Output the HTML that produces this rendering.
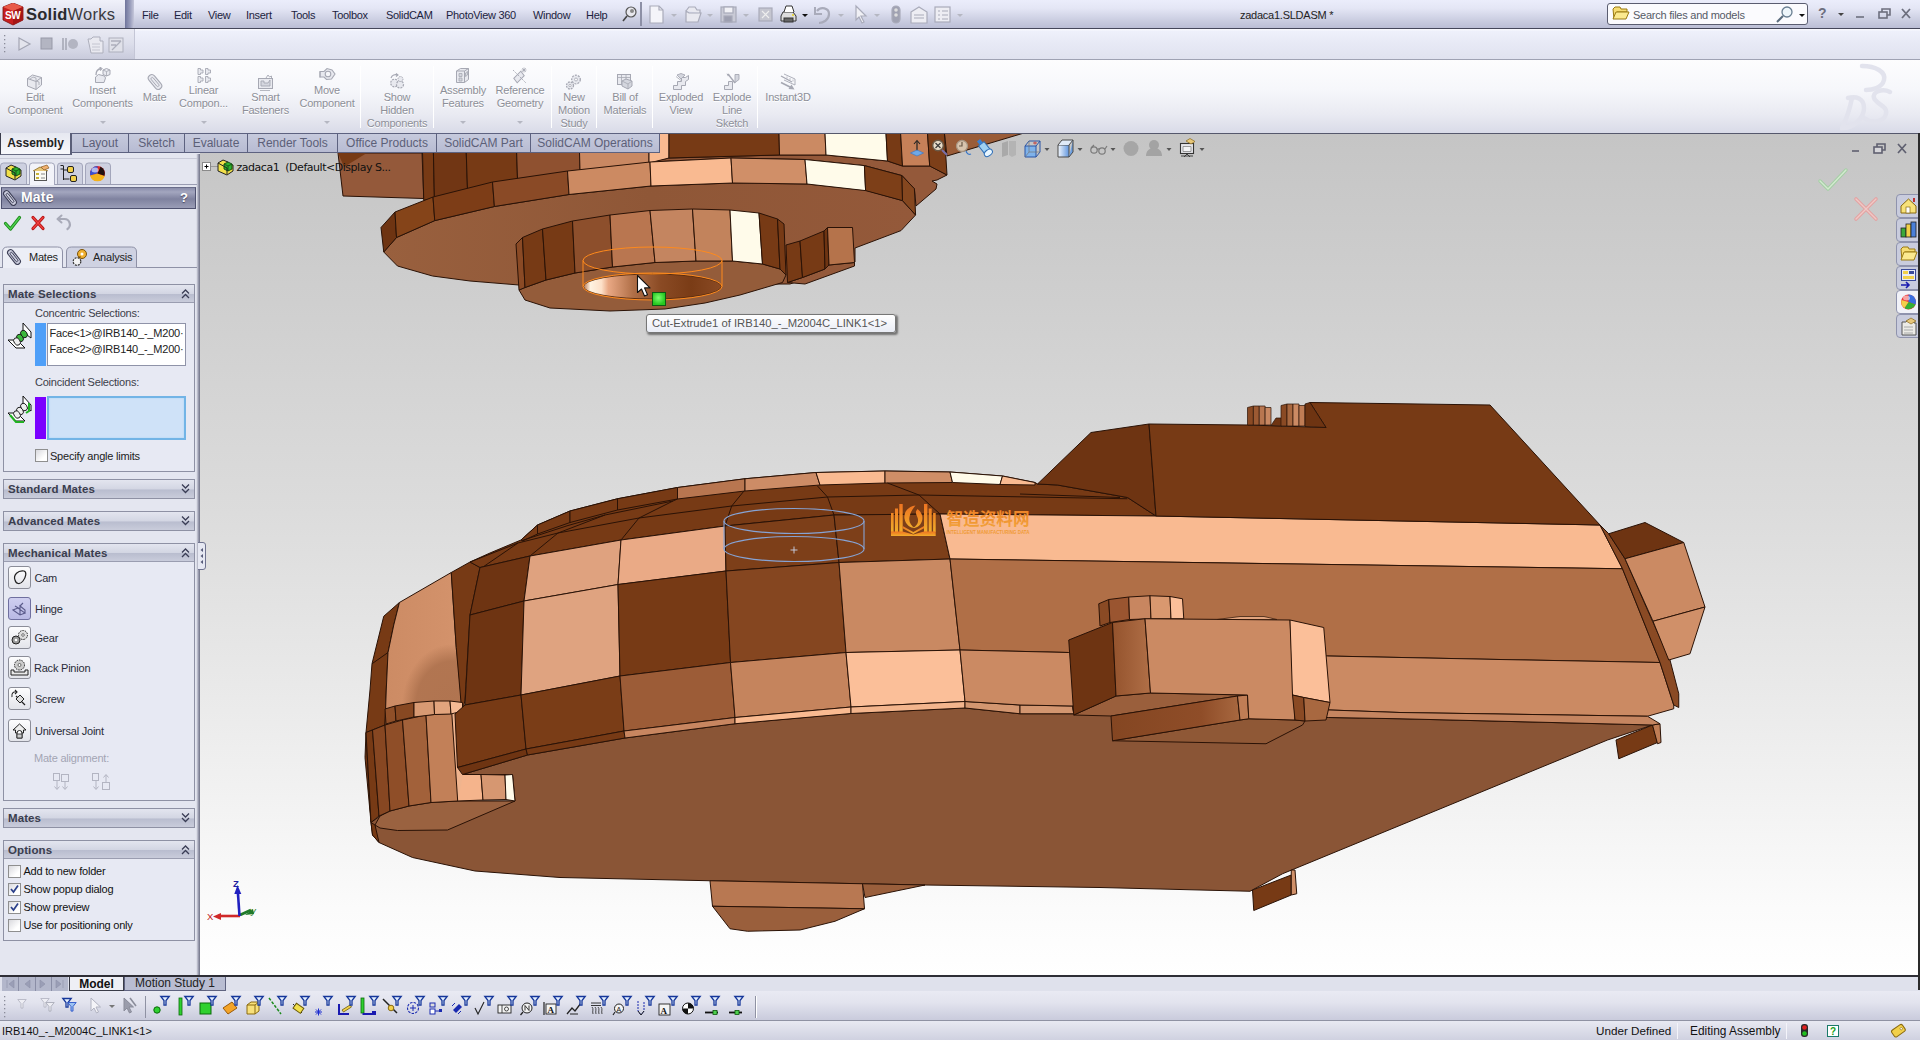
<!DOCTYPE html>
<html lang="en">
<head>
<meta charset="utf-8">
<title>zadaca1.SLDASM - SolidWorks</title>
<style>
*{box-sizing:border-box;margin:0;padding:0}
html,body{width:1920px;height:1040px;overflow:hidden;background:#e4e6f0}
body{position:relative;font-family:"Liberation Sans","DejaVu Sans",sans-serif;font-size:11px;color:#1a1a1a;-webkit-font-smoothing:antialiased}
.abs{position:absolute}
#titlebar{position:absolute;left:0;top:0;width:1920px;height:29px;background:linear-gradient(#ebedfb 0%,#e4e6f5 30%,#cdd0e3 68%,#bbbed5 100%);border-bottom:1.4px solid #45475a}
#logo{position:absolute;left:0;top:0;width:125px;height:28px;background:linear-gradient(#f0f1fa 0%,#e2e3f0 45%,#c4c6d9 100%)}
#logosep{position:absolute;left:125px;top:0;width:9px;height:28px;background:linear-gradient(90deg,#6f749b,#9b9fbd 60%,#c5c7da)}
.menu{position:absolute;top:8px;font-size:11px;letter-spacing:-0.3px;color:#1c2340;white-space:nowrap;line-height:14px}
#row2{position:absolute;left:0;top:29px;width:1920px;height:31px;background:linear-gradient(#fbfbff 0%,#eef0fb 8%,#e7e9f5 50%,#e0e2ef 100%);border-bottom:1px solid #9fa2b3}
#row2l{position:absolute;left:0;top:29px;width:135px;height:30px;background:linear-gradient(#e9eaf3 0%,#dcdeeb 50%,#c9cbdc 100%);border-right:1px solid #c4c6d6}
#cm{position:absolute;left:0;top:60px;width:1920px;height:74px;background:linear-gradient(#fdfdfe 0%,#f6f7fb 40%,#e9eaf2 75%,#d9dbe8 100%);border-bottom:1.4px solid #55586c}
.cmb{position:absolute;text-align:center;color:#8d8f98;text-shadow:0 1px 0 #fff;font-size:11px;letter-spacing:-0.2px;line-height:13px;white-space:nowrap}
.cmsep{position:absolute;top:66px;width:1px;height:62px;background:#d3d5e0;border-right:1px solid #fff}
.dd{position:absolute;width:0;height:0;border-left:3px solid transparent;border-right:3px solid transparent;border-top:3px solid #b5b7c2}
#tabs{position:absolute;left:0;top:133px;height:22px;width:660px;z-index:5}
.tab{position:absolute;top:0;height:20px;background:linear-gradient(#c6cadd,#b7bbd2);border:1.3px solid #5d6280;border-left:none;color:#5c6078;font-size:12px;line-height:18px;text-align:center;white-space:nowrap}
.tab.act{background:linear-gradient(#e6e8f1,#f8f8fb);border:none;border-left:1px solid #3a3c4c;border-right:2px solid #5a5e78;border-bottom:1.5px solid #6a6e85;color:#222;font-weight:bold;height:22px;top:0;line-height:21px}
#viewport{position:absolute;left:200px;top:134px;width:1719px;height:842px;background:linear-gradient(#c5c5c5 0%,#cfcfcf 20%,#dcdcdc 45%,#ececec 70%,#fbfbfb 92%,#ffffff 100%);overflow:hidden}
#vpr{position:absolute;left:1918px;top:133px;width:2px;height:857px;background:#2b2b2b;z-index:3}
#lp{position:absolute;left:0;top:154px;width:200px;height:822px;background:#e4e6f0}
#lpb{position:absolute;left:196px;top:154px;width:4px;height:822px;background:linear-gradient(90deg,#eceef6,#9a9caf 60%,#6f7285)}
.grp{position:absolute;left:3px;width:192px;border:1px solid #8e91a4;background:#e7e9f3}
.gh{position:absolute;left:0;top:0;width:190px;height:18px;background:linear-gradient(#e3e5ef 0%,#d3d6e3 50%,#b9bdcf 55%,#c9ccdb 100%);border-bottom:1px solid #9a9db0;font-weight:bold;font-size:11.5px;color:#3a3d4e;line-height:19px;padding-left:4px;letter-spacing:0.1px}
.gh.closed{border-bottom:none;height:18px}
.chev{position:absolute;right:4px;top:3px;width:9px;height:11px}
.lbl{position:absolute;font-size:11px;letter-spacing:-0.22px;white-space:nowrap;color:#3c3e4a;line-height:13px}
.cb{position:absolute;width:13px;height:13px;border:1px solid #8f8f8f;background:linear-gradient(135deg,#d9d9de,#fff 70%)}
.mbtn{position:absolute;left:8px;width:23px;height:23px;border:1px solid #8b8d98;border-radius:3px;background:linear-gradient(#fdfdfe,#e3e4ea)}
#botbar{position:absolute;left:0;top:974.5px;width:1920px;height:16.5px;background:#dfe1ec;border-top:2px solid #2e2e36}
#filt{position:absolute;left:0;top:991px;width:1920px;height:30px;background:linear-gradient(#e9eaf3 0%,#e2e3ee 40%,#c9cbdc 100%);border-bottom:1px solid #8f92a3}
#status{position:absolute;left:0;top:1021px;width:1920px;height:19px;background:linear-gradient(#e8e9f2,#cfd1e0);font-size:12px;color:#111}
</style>
</head>
<body>
<!-- ===== Title bar ===== -->
<div id="titlebar"></div>
<div id="logo">
<svg class="abs" style="left:2px;top:3px" width="22" height="23" viewBox="0 0 22 23">
<polygon points="1,4 11,0 21,4 21,17 11,22 1,17" fill="#c81e1e" stroke="#7a1010" stroke-width="0.8"/>
<polygon points="1,4 11,8 21,4 11,0" fill="#e85a4a"/>
<polygon points="11,8 21,4 21,17 11,22" fill="#a51515"/>
<text x="3" y="16" font-family="Liberation Sans,sans-serif" font-weight="bold" font-size="10" fill="#fff" letter-spacing="-0.5">SW</text>
</svg>
<span class="abs" style="left:26px;top:3px;font-size:16.5px;line-height:22px;color:#2a2a2e;font-weight:bold;letter-spacing:0.25px;white-space:nowrap">Solid<span style="font-weight:normal;color:#3a3a40">Works</span></span>
</div>
<div id="logosep"></div>
<span class="menu" style="left:142px">File</span>
<span class="menu" style="left:174px">Edit</span>
<span class="menu" style="left:208px">View</span>
<span class="menu" style="left:246px">Insert</span>
<span class="menu" style="left:291px">Tools</span>
<span class="menu" style="left:332px">Toolbox</span>
<span class="menu" style="left:386px">SolidCAM</span>
<span class="menu" style="left:446px">PhotoView 360</span>
<span class="menu" style="left:533px">Window</span>
<span class="menu" style="left:586px">Help</span>
<svg class="abs" style="left:622px;top:5px" width="16" height="18" viewBox="0 0 16 18"><circle cx="9" cy="7" r="5" fill="#e8e8ee" stroke="#555" stroke-width="1.2"/><path d="M5 11 L1 16" stroke="#444" stroke-width="1.6"/><circle cx="10" cy="6" r="2" fill="#888"/></svg>
<div class="abs" style="left:640px;top:2px;width:2px;height:24px;background:#8d90a6"></div>
<!-- quick access -->
<svg class="abs" style="left:645px;top:3px" width="325" height="24" viewBox="0 0 325 24" fill="none" stroke="#a9abba" stroke-width="1.2">
<path d="M5 3h9l4 4v13h-13z" fill="#f4f4f9"/><path d="M14 3v4h4"/>
<path d="M41 8l3-4h6l2 3h3v3M41 8v11h12l3-9h-12z" fill="#e9e9f0"/>
<rect x="76" y="4" width="15" height="15" fill="#c9cad6"/><rect x="79" y="4" width="9" height="6" fill="#f1f1f6"/><rect x="79" y="13" width="8" height="6" fill="#9d9fb0"/>
<rect x="114" y="5" width="13" height="13" fill="#c5c6d0"/><path d="M117 8l7 7M124 8l-7 7" stroke="#eee"/>
<g stroke="#333" stroke-width="1"><path d="M138 9h10l3 4v5h-15v-5z" fill="#ddd"/><path d="M139 9l2-6h6l2 6" fill="#fff"/><rect x="139" y="15" width="9" height="4" fill="#666"/><circle cx="148" cy="12" r="1" fill="#e7d21c" stroke="none"/></g>
<path d="M172 8c4-5 12-3 12 3s-6 9-10 9" stroke-width="2.2"/><path d="M170 4v7h7" stroke-width="2"/>
<path d="M211 3l0 14 3-3 3 6 2-1-3-6h5z" fill="#f0f0f5"/>
<rect x="247" y="3" width="8" height="17" rx="4" fill="#a0a2b2"/><circle cx="251" cy="7" r="1.8" fill="#ddd" stroke="none"/><circle cx="251" cy="12" r="1.8" fill="#ddd" stroke="none"/>
<path d="M266 9l8-5 8 5v11h-16z" fill="#ededf3"/><path d="M269 12h10M269 15h10"/>
<rect x="290" y="4" width="15" height="15" fill="#ededf3"/><path d="M293 8h2M297 8h6M293 12h2M297 12h6M293 16h2M297 16h6"/>
</svg>
<div class="dd" style="left:671px;top:14px"></div><div class="dd" style="left:707px;top:14px"></div><div class="dd" style="left:743px;top:14px"></div>
<div class="dd" style="left:802px;top:14px;border-top-color:#111"></div><div class="dd" style="left:838px;top:14px"></div><div class="dd" style="left:874px;top:14px"></div><div class="dd" style="left:957px;top:14px"></div>
<span class="abs" style="left:1240px;top:8px;font-size:11px;letter-spacing:-0.25px;line-height:14px;color:#222;white-space:nowrap" id="ttl">zadaca1.SLDASM *</span>
<!-- search -->
<div class="abs" style="left:1607px;top:3px;width:201px;height:22px;background:#fbfbfe;border:1px solid #5a5d70;border-radius:3px"></div>
<svg class="abs" style="left:1612px;top:6px" width="18" height="15" viewBox="0 0 18 15"><path d="M1 3l2-2h5l1 2h6v3h-10l-3 7z" fill="#f6dc72" stroke="#9a7a12" stroke-width="1"/><path d="M1 13l3-7h13l-3 7z" fill="#fbe98f" stroke="#9a7a12" stroke-width="1"/></svg>
<span class="abs" style="left:1633px;top:8px;font-size:11px;letter-spacing:-0.25px;line-height:14px;color:#555a66;white-space:nowrap" id="srch" >Search files and models</span>
<svg class="abs" style="left:1775px;top:5px" width="20" height="18" viewBox="0 0 20 18"><circle cx="12" cy="7" r="5" fill="#eef6fb" stroke="#6a7f92" stroke-width="1.3"/><path d="M8 11L2 17" stroke="#5a6c7d" stroke-width="2"/></svg>
<div class="dd" style="left:1799px;top:14px;border-top-color:#111"></div>
<span class="abs" style="left:1818px;top:5px;font-size:14px;font-weight:bold;color:#6d6f7e;line-height:16px">?</span>
<div class="dd" style="left:1838px;top:13px;border-top-color:#444"></div>
<svg class="abs" style="left:1852px;top:6px" width="64" height="16" viewBox="0 0 64 16" fill="none" stroke="#6d6f7e" stroke-width="1.6"><path d="M4 11h8"/><rect x="27" y="6" width="8" height="6"/><path d="M30 6v-3h8v6h-3"/><path d="M50 3l8 9M58 3l-8 9" stroke-width="1.8"/></svg>
<!-- ===== Row 2 ===== -->
<div id="row2"></div><div id="row2l"></div>
<svg class="abs" style="left:2px;top:33px" width="130" height="24" viewBox="0 0 130 24">
<g fill="#8a8c9a"><rect x="2" y="2" width="1.3" height="1.3"/><rect x="2" y="6" width="1.3" height="1.3"/><rect x="2" y="10" width="1.3" height="1.3"/><rect x="2" y="14" width="1.3" height="1.3"/><rect x="2" y="18" width="1.3" height="1.3"/></g>
<path d="M17 5v12l11-6z" fill="#e3e4ec" stroke="#a3a5b3" stroke-width="1.2"/>
<rect x="39" y="5" width="11" height="11" fill="#b3b5c2" stroke="#9799a8"/>
<path d="M61 5v12M64 5v12" stroke="#a3a5b3" stroke-width="1.5"/><circle cx="71" cy="11" r="5" fill="#b3b5c2"/>
<path d="M86 6h3l2-2h7v4h3v12h-12z" fill="#e9e9f0" stroke="#adafbc"/><path d="M90 11h8M90 14h8M90 17h8" stroke="#c4c5d0"/>
<rect x="107" y="5" width="14" height="14" fill="#e0e1e9" stroke="#adafbc"/><path d="M109 8h10M109 12h5M110 17l9-9" stroke="#adafbc" stroke-width="1.3"/>
</svg>
<!-- ===== Command manager ===== -->
<div id="cm"></div>
<svg class="abs" style="left:1840px;top:62px" width="56" height="70" viewBox="0 0 56 70" fill="none" stroke="#e2e3ed" stroke-width="4.500" stroke-linecap="round"><path d="M22 4c14 0 24 6 22 14s-12 10-18 10"/><path d="M12 36c-2 10-6 22-10 30c12 0 22-10 22-20s-8-12-16-10"/><path d="M50 30c-8-4-18 0-16 6s14 8 12 16s-14 10-22 4"/></svg>
<div class="cmb" style="left:-10.0px;top:90.95px;width:90px">Edit<br>Component</div>
<svg class="abs" style="left:26.0px;top:73.25px" width="18" height="18" viewBox="0 0 18 18"><path d="M1.500 5.500l5-3.500 9 2.500v7.500l-5.500 4.500-8.500-3.500z" fill="#e8e9ef" stroke="#a6a8b3"/><path d="M1.500 5.500l8.500 3v8M10 8.500l5.500-4" fill="none" stroke="#a6a8b3"/><path d="M4 6l3-2 3 1v3l3 1v3" fill="none" stroke="#a6a8b3" stroke-width="0.800"/></svg>
<div class="cmb" style="left:57.5px;top:84.20px;width:90px">Insert<br>Components</div>
<svg class="abs" style="left:93.5px;top:66.50px" width="18" height="18" viewBox="0 0 18 18"><path d="M2 8c0-4 2-6 5-6.500" fill="none" stroke="#a6a8b3" stroke-width="1.300"/><path d="M5.500 0l2.500 1.500-2 2" fill="none" stroke="#a6a8b3" stroke-width="1.100"/><path d="M9 3l3.500-1.500 3.500 1.500v4.500l-3.500 1.500-3.500-1.500z" fill="#e8e9ef" stroke="#a6a8b3"/><path d="M9 3l3.500 1.500 3.500-1.500M12.500 4.500v4.500" fill="none" stroke="#a6a8b3" stroke-width="0.800"/><path d="M1.500 15.500v-5.500l3-2.500 6 1.500 1 2-1.500 4.500z" fill="#e8e9ef" stroke="#a6a8b3"/></svg>
<div class="dd" style="left:99.5px;top:121px"></div>
<div class="cmb" style="left:109.5px;top:90.95px;width:90px">Mate</div>
<svg class="abs" style="left:145.5px;top:73.25px" width="18" height="18" viewBox="0 0 18 18"><g transform="rotate(-40 9 9)"><rect x="5.500" y="0.500" width="7" height="17" rx="3.500" fill="#e8e9ef" stroke="#a6a8b3" stroke-width="1.100"/><rect x="7.700" y="3.500" width="2.600" height="11" rx="1.300" fill="none" stroke="#a6a8b3" stroke-width="0.900"/></g></svg>
<div class="cmb" style="left:158.5px;top:84.20px;width:90px">Linear<br>Compon...</div>
<svg class="abs" style="left:194.5px;top:66.50px" width="18" height="18" viewBox="0 0 18 18"><path d="M3 1.5h2.500v1.500h2.500v3h-2.500v1.500h-2.500z" fill="#e8e9ef" stroke="#a6a8b3" stroke-width="0.900"/><path d="M3 9.5h2.500v1.500h2.500v3h-2.500v1.500h-2.500z" fill="#e8e9ef" stroke="#a6a8b3" stroke-width="0.900"/><path d="M10.5 1.5h2.500v1.500h2.500v3h-2.500v1.500h-2.500z" fill="#e8e9ef" stroke="#a6a8b3" stroke-width="0.900"/><path d="M10.5 9.5h2.500v1.500h2.500v3h-2.500v1.500h-2.500z" fill="#e8e9ef" stroke="#a6a8b3" stroke-width="0.900"/></svg>
<div class="dd" style="left:200.5px;top:121px"></div>
<div class="cmb" style="left:220.5px;top:90.95px;width:90px">Smart<br>Fasteners</div>
<svg class="abs" style="left:256.5px;top:73.25px" width="18" height="18" viewBox="0 0 18 18"><rect x="1.500" y="5.500" width="14" height="10" fill="#e8e9ef" stroke="#a6a8b3"/><path d="M4 13v-5h3v2h4l2-3v6z" fill="#d4d6de" stroke="#a6a8b3" stroke-width="0.900"/><path d="M9 5l2-3 1.500 2 2-1v2.500" fill="none" stroke="#a6a8b3" stroke-width="0.900"/><path d="M3 17.500h10" stroke="#a6a8b3" stroke-width="0.800"/></svg>
<div class="cmb" style="left:282.0px;top:84.20px;width:90px">Move<br>Component</div>
<svg class="abs" style="left:318.0px;top:66.50px" width="18" height="18" viewBox="0 0 18 18"><path d="M2 4.500h4l3-3 5 1.500 3 4-3.500 5-5 0.500-2.500-2.500h-4z" fill="#e8e9ef" stroke="#a6a8b3" stroke-width="1.100"/><circle cx="10" cy="7" r="2.800" fill="#f6f6f9" stroke="#a6a8b3" stroke-width="1.100"/><path d="M2 4.500v6" stroke="#a6a8b3"/></svg>
<div class="dd" style="left:324.0px;top:121px"></div>
<div class="cmb" style="left:352.0px;top:90.95px;width:90px">Show<br>Hidden<br>Components</div>
<svg class="abs" style="left:388.0px;top:73.25px" width="18" height="18" viewBox="0 0 18 18"><circle cx="6.500" cy="10" r="3.800" fill="#e8e9ef" stroke="#a6a8b3" stroke-width="1.200" stroke-dasharray="2 1"/><circle cx="12" cy="11.500" r="3.500" fill="#e8e9ef" stroke="#a6a8b3" stroke-width="1.200" stroke-dasharray="2 1"/><circle cx="12.500" cy="6" r="2.500" fill="#e8e9ef" stroke="#a6a8b3" stroke-dasharray="1.500 1"/><path d="M3 5c1-3 4-4 6.500-3M8 0.500l2 1.500-2 1.500" fill="none" stroke="#a6a8b3" stroke-width="1.100"/></svg>
<div class="cmb" style="left:418.0px;top:84.20px;width:90px">Assembly<br>Features</div>
<svg class="abs" style="left:454.0px;top:66.50px" width="18" height="18" viewBox="0 0 18 18"><path d="M2.500 4l4-2.500h8v11l-4 3h-8z" fill="#e8e9ef" stroke="#a6a8b3"/><path d="M2.500 4h8v11.500M10.500 4l4-2.500" fill="none" stroke="#a6a8b3"/><path d="M5 6.500h3v3h-3zM5 11h3v3h-3zM11.500 6l2-1.500v3.500l-2 1.500z" fill="#d4d6de" stroke="#a6a8b3" stroke-width="0.800"/></svg>
<div class="dd" style="left:460.0px;top:121px"></div>
<div class="cmb" style="left:475.0px;top:84.20px;width:90px">Reference<br>Geometry</div>
<svg class="abs" style="left:511.0px;top:66.50px" width="18" height="18" viewBox="0 0 18 18"><path d="M3 12l6-8 4 4-6 8z" fill="#e8e9ef" stroke="#a6a8b3" transform="rotate(8 8 10)"/><path d="M2 3l13 13" stroke="#a6a8b3" stroke-width="0.900" stroke-dasharray="2 1.200"/><path d="M13 0.500v5M10.500 3h5M11.200 1.200l3.600 3.600M14.800 1.200l-3.600 3.600" stroke="#a6a8b3" stroke-width="0.800"/></svg>
<div class="dd" style="left:517.0px;top:121px"></div>
<div class="cmb" style="left:529.0px;top:90.95px;width:90px">New<br>Motion<br>Study</div>
<svg class="abs" style="left:565.0px;top:73.25px" width="18" height="18" viewBox="0 0 18 18"><circle cx="11" cy="6.500" r="4.300" fill="#e8e9ef" stroke="#a6a8b3" stroke-width="1.300" stroke-dasharray="2 1.100"/><circle cx="11" cy="6.500" r="1.500" fill="#f8f8fa" stroke="#a6a8b3" stroke-width="0.800"/><circle cx="5" cy="12.500" r="3.500" fill="#e8e9ef" stroke="#a6a8b3" stroke-width="1.300" stroke-dasharray="1.800 1"/><circle cx="5" cy="12.500" r="1.200" fill="#f8f8fa" stroke="#a6a8b3" stroke-width="0.800"/></svg>
<div class="cmb" style="left:580.0px;top:90.95px;width:90px">Bill of<br>Materials</div>
<svg class="abs" style="left:616.0px;top:73.25px" width="18" height="18" viewBox="0 0 18 18"><rect x="1.500" y="1.500" width="13" height="10" fill="#e8e9ef" stroke="#a6a8b3"/><path d="M1.500 4.500h13M5.500 1.500v10M10 1.500v10" stroke="#a6a8b3" stroke-width="0.800"/><path d="M6 8l4-2 6 2v5l-4 3-6-3z" fill="#d4d6de" stroke="#a6a8b3"/><path d="M6 8l6 3 4-3M12 11v5" fill="none" stroke="#a6a8b3" stroke-width="0.800"/></svg>
<div class="cmb" style="left:636.0px;top:90.95px;width:90px">Exploded<br>View</div>
<svg class="abs" style="left:672.0px;top:73.25px" width="18" height="18" viewBox="0 0 18 18"><path d="M1.500 16.500v-4h4v-4h4v-4h4l3-2v4l-3 2v4h-4v4z" fill="#e8e9ef" stroke="#a6a8b3"/><path d="M5 2l4-1.500 4 1.500-4 4z" fill="#d4d6de" stroke="#a6a8b3" stroke-width="0.900"/><path d="M4 3.500l5 4" stroke="#a6a8b3" stroke-width="0.800"/></svg>
<div class="cmb" style="left:687.0px;top:90.95px;width:90px">Explode<br>Line<br>Sketch</div>
<svg class="abs" style="left:723.0px;top:73.25px" width="18" height="18" viewBox="0 0 18 18"><path d="M1.500 16.500v-4h4v-4h4v8z" fill="#e8e9ef" stroke="#a6a8b3"/><path d="M12 1.500h4v5l-4 3z" fill="#d4d6de" stroke="#a6a8b3" stroke-width="0.900"/><path d="M5 1l7 9" stroke="#a6a8b3" stroke-width="1.400"/><path d="M3.500 0.500l3 1-1.500 2z" fill="#a6a8b3"/></svg>
<div class="cmb" style="left:743.0px;top:90.95px;width:90px">Instant3D</div>
<svg class="abs" style="left:779.0px;top:73.25px" width="18" height="18" viewBox="0 0 18 18"><path d="M2 3l11 6" stroke="#a6a8b3" stroke-width="1.200"/><path d="M5 1l11 5v6l-11-5" fill="none" stroke="#a6a8b3" stroke-width="0.900"/><path d="M8 3.500v2M11 5v2M14 6.500v2" stroke="#a6a8b3" stroke-width="0.700"/><path d="M2 9.500l10 5" stroke="#a6a8b3" stroke-width="1.600"/><path d="M15.500 16.500l-6-0.500 3-4.500z" fill="#a6a8b3"/></svg>
<div class="cmsep" style="left:360px"></div>
<div class="cmsep" style="left:433px"></div>
<div class="cmsep" style="left:551px"></div>
<div class="cmsep" style="left:596px"></div>
<div class="cmsep" style="left:652px"></div>
<div class="cmsep" style="left:757px"></div>
<!-- ===== Viewport ===== -->
<div id="viewport">
<svg class="abs" style="left:0;top:-1px" width="1719" height="843" viewBox="200 133 1719 843" shape-rendering="geometricPrecision">
<defs>
<linearGradient id="gFl" x1="0" y1="0" x2="1" y2="0"><stop offset="0" stop-color="#99603e"/><stop offset="0.5" stop-color="#8f5737"/><stop offset="1" stop-color="#94593a"/></linearGradient>
<linearGradient id="gHole" x1="0" y1="0" x2="1" y2="0"><stop offset="0" stop-color="#b5734b"/><stop offset="0.05" stop-color="#fff3e2"/><stop offset="0.13" stop-color="#fde0c8"/><stop offset="0.18" stop-color="#e9a884"/><stop offset="0.36" stop-color="#b06f47"/><stop offset="0.56" stop-color="#8a4a24"/><stop offset="0.78" stop-color="#7a3c16"/><stop offset="1" stop-color="#8a4a24"/></linearGradient>
<linearGradient id="gPeach" x1="0" y1="0" x2="1" y2="0"><stop offset="0" stop-color="#cc8b64"/><stop offset="1" stop-color="#d4936c"/></linearGradient>
<radialGradient id="gShadow"><stop offset="0" stop-color="#b07450" stop-opacity="1"/><stop offset="0.72" stop-color="#b07450" stop-opacity="0.95"/><stop offset="1" stop-color="#b07450" stop-opacity="0"/></radialGradient>
<linearGradient id="gStep" x1="0" y1="0" x2="1" y2="0"><stop offset="0" stop-color="#844622"/><stop offset="0.7" stop-color="#8f4d28"/><stop offset="1" stop-color="#a86840"/></linearGradient>
<linearGradient id="gBlk2" x1="0" y1="0" x2="1" y2="0"><stop offset="0" stop-color="#94532d"/><stop offset="1" stop-color="#b06f47"/></linearGradient>
</defs>
<polygon points="338,153 343,196 423.75,198.5 422,153" fill="#94593a" stroke="#2a1206" stroke-width="1" stroke-linejoin="round"/>
<polygon points="338,153 366,153.5 344,167" fill="#773a15" stroke="none" stroke-width="1" stroke-linejoin="round"/>
<polygon points="396.5,237.5 434.75,220.6 494.4,206.5 569,194.5 651,186 732.5,183 807,184 865,190 902.5,200.6 915.6,215 901,230.6 855,248 855,262 790,284 519,285 470,281 432.5,276 397.5,266 383.75,252" fill="url(#gFl)" stroke="#2a1206" stroke-width="1" stroke-linejoin="round"/>
<polygon points="649,162 669,158 779,155 826,155 887.5,161 902.5,166 930,166 947,175 937,180 932,181 937,184 936,189 916,206 914.4,188.75 902,175.6 864.4,165.6 805,159.5 731,158 650,162" fill="#94593a" stroke="#2a1206" stroke-width="1" stroke-linejoin="round"/>
<polygon points="944.4,133 1024,133 947,156" fill="#9a5c38" stroke="#2a1206" stroke-width="1" stroke-linejoin="round"/>
<polygon points="422,133 433,133 434.4,198 423.75,200.5" fill="#773a15" stroke="#2a1206" stroke-width="1" stroke-linejoin="round"/>
<polygon points="433,133 465.6,133 467.5,190 434.4,198" fill="#713614" stroke="#2a1206" stroke-width="1" stroke-linejoin="round"/>
<polygon points="465.6,133 516,133 517.5,179 467.5,190" fill="#773a15" stroke="#2a1206" stroke-width="1" stroke-linejoin="round"/>
<polygon points="516,133 579,133 580,170.5 517.5,179" fill="#8f5130" stroke="#2a1206" stroke-width="1" stroke-linejoin="round"/>
<polygon points="579,133 649,133 649,163 580,170.5" fill="#c98862" stroke="#2a1206" stroke-width="1" stroke-linejoin="round"/>
<polygon points="649,133 669,133 669,158 649,163" fill="#f9ba91" stroke="#2a1206" stroke-width="1" stroke-linejoin="round"/>
<polygon points="669,133 779,133 779.5,155 669,158" fill="#773a15" stroke="#2a1206" stroke-width="1" stroke-linejoin="round"/>
<polygon points="779,133 825,133 826,155 779.5,155" fill="#cb8a63" stroke="#2a1206" stroke-width="1" stroke-linejoin="round"/>
<polygon points="825,133 886,133 887.5,161 826,155" fill="#fffbea" stroke="#2a1206" stroke-width="1" stroke-linejoin="round"/>
<polygon points="886,133 900.6,133 902.5,166 887.5,161" fill="#773a15" stroke="#2a1206" stroke-width="1" stroke-linejoin="round"/>
<polygon points="900.6,133 927.5,133 929.7,166 902.5,166" fill="#c68058" stroke="#2a1206" stroke-width="1" stroke-linejoin="round"/>
<polygon points="927.5,133 944.4,133 947,175 929.7,166" fill="#7d3f19" stroke="#2a1206" stroke-width="1" stroke-linejoin="round"/>
<polygon points="381,227.5 395,212 396.5,237.5 383.75,252" fill="#6e3412" stroke="#2a1206" stroke-width="1" stroke-linejoin="round"/>
<polygon points="395,212 433,197 434.75,220.6 396.5,237.5" fill="#854419" stroke="#2a1206" stroke-width="1" stroke-linejoin="round"/>
<polygon points="433,197 492.5,182 494.4,206.5 434.75,220.6" fill="#7d3d17" stroke="#2a1206" stroke-width="1" stroke-linejoin="round"/>
<polygon points="492.5,182 567.5,171 569,194.5 494.4,206.5" fill="#8a4a26" stroke="#2a1206" stroke-width="1" stroke-linejoin="round"/>
<polygon points="567.5,171 650,162 651,186 569,194.5" fill="#cc8a62" stroke="#2a1206" stroke-width="1" stroke-linejoin="round"/>
<polygon points="650,162 731,158 732.5,183 651,186" fill="#f9ba91" stroke="#2a1206" stroke-width="1" stroke-linejoin="round"/>
<polygon points="731,158 805,159.5 807,184 732.5,183" fill="#d08f68" stroke="#2a1206" stroke-width="1" stroke-linejoin="round"/>
<polygon points="805,159.5 864.4,165.6 865.6,190.6 807,184" fill="#fffbea" stroke="#2a1206" stroke-width="1" stroke-linejoin="round"/>
<polygon points="864.4,165.6 902,175.6 902.5,200.6 865.6,190.6" fill="#7d3f18" stroke="#2a1206" stroke-width="1" stroke-linejoin="round"/>
<polygon points="902,175.6 914.4,188.75 915.6,215 902.5,200.6" fill="#85471f" stroke="#2a1206" stroke-width="1" stroke-linejoin="round"/>
<polygon points="519,290 525,287.5 546,280 575,273 612.5,267 655,262.5 696,261 732.5,261 762.5,264 780,269 786,275 782.5,282.5 740,295 705,303 665,309 610,311 550,308 525,300" fill="#945c3a" stroke="#2a1206" stroke-width="1" stroke-linejoin="round"/>
<polygon points="516,244 522.5,237.5 525,287.5 519,290" fill="#8a4a25" stroke="#2a1206" stroke-width="1" stroke-linejoin="round"/>
<polygon points="522.5,237.5 542.5,229 546,280 525,287.5" fill="#773a15" stroke="#2a1206" stroke-width="1" stroke-linejoin="round"/>
<polygon points="542.5,229 572.5,221 575,273 546,280" fill="#773a15" stroke="#2a1206" stroke-width="1" stroke-linejoin="round"/>
<polygon points="572.5,221 610,215 612.5,267 575,273" fill="#8d4f2c" stroke="#2a1206" stroke-width="1" stroke-linejoin="round"/>
<polygon points="610,215 650,210.5 655,262.5 612.5,267" fill="#b97650" stroke="#2a1206" stroke-width="1" stroke-linejoin="round"/>
<polygon points="650,210.5 692.5,209 696,261 655,262.5" fill="#c48560" stroke="#2a1206" stroke-width="1" stroke-linejoin="round"/>
<polygon points="692.5,209 730,210 732.5,261 696,261" fill="#c2835c" stroke="#2a1206" stroke-width="1" stroke-linejoin="round"/>
<polygon points="730,210 759,213 762.5,264 732.5,261" fill="#fffbea" stroke="#2a1206" stroke-width="1" stroke-linejoin="round"/>
<polygon points="759,213 777.5,219 780,269 762.5,264" fill="#773a15" stroke="#2a1206" stroke-width="1" stroke-linejoin="round"/>
<polygon points="777.5,219 784,224 786,275 780,269" fill="#773a15" stroke="#2a1206" stroke-width="1" stroke-linejoin="round"/>
<ellipse cx="652.5" cy="286.5" rx="69" ry="12.5" fill="url(#gHole)" stroke="#4a2208" stroke-width="0.8"/>
<path d="M583.5 286.5 A69 12.5 0 0 1 721.5 286.5 A69 10 0 0 0 600 292 Z" fill="#945c3a" opacity="0"/>
<polygon points="787.5,282.5 802.5,277.5 825,269 829,265 854.5,262.5 854.5,266 805,284" fill="#94593a" stroke="#2a1206" stroke-width="1" stroke-linejoin="round"/>
<polygon points="786,245 800,241 802.5,277.5 787.5,282.5" fill="#773a15" stroke="#2a1206" stroke-width="1" stroke-linejoin="round"/>
<polygon points="800,241 824,231 825,269 802.5,277.5" fill="#773a15" stroke="#2a1206" stroke-width="1" stroke-linejoin="round"/>
<polygon points="824,231 827.5,227.5 829,265 825,269" fill="#6e3412" stroke="#2a1206" stroke-width="1" stroke-linejoin="round"/>
<polygon points="827.5,227.5 852.5,227.5 854.5,262.5 829,265" fill="#b5734b" stroke="#2a1206" stroke-width="1" stroke-linejoin="round"/>
<g fill="none" stroke="#ff8a1c" stroke-width="1"><ellipse cx="652.5" cy="260.5" rx="69.5" ry="13.5"/><ellipse cx="652.5" cy="286.5" rx="69.5" ry="13.5"/><path d="M583 260.5V286.5M722 260.5V286.5"/></g>
<polygon points="371,822.5 372.5,835 379,842.5 412.5,857.5 475,871 560,877.5 710,880.75 925,885 1100,887.5 1250,891.25 1282.5,873.75 1607.5,740 1652.5,725 1400,718.75 1328.75,717.5 1073.75,713.75 1020,713.75 965,708 851,713.5 820,716 735,723.75 625,738 527.5,755 462.5,774.5 512.5,774.5 515,801 457.5,801 409,806 380,816" fill="#8a5536" stroke="#2a1206" stroke-width="1" stroke-linejoin="round"/>
<polygon points="710,880.75 862.5,883.75 864.5,908.75 712.5,906.25" fill="#b87852" stroke="#2a1206" stroke-width="1" stroke-linejoin="round"/>
<polygon points="712.5,906.25 864.5,908.75 835,921.25 800,930 747.5,931.25 730,928.75" fill="#9a5f3c" stroke="#2a1206" stroke-width="1" stroke-linejoin="round"/>
<polygon points="862.5,883.75 925,885 865,897.5" fill="#9a5f3c" stroke="#2a1206" stroke-width="1" stroke-linejoin="round"/>
<polygon points="1616,740 1652.5,725 1657.5,742.5 1618.75,758.75" fill="#773a15" stroke="#2a1206" stroke-width="1" stroke-linejoin="round"/>
<polygon points="1652.5,725 1660,723.75 1661,742.5 1657.5,743.75" fill="#c07d55" stroke="#2a1206" stroke-width="1" stroke-linejoin="round"/>
<polygon points="1252.5,890 1291.25,875 1291.25,895 1253.75,910.5" fill="#773a15" stroke="#2a1206" stroke-width="1" stroke-linejoin="round"/>
<polygon points="1291.25,870 1295,870 1296.75,893.75 1291.25,895" fill="#d09069" stroke="#2a1206" stroke-width="1" stroke-linejoin="round"/>
<polygon points="375,825 380,816 390,811 409,806 431,802.5 457.5,801 515,801 447.5,830 397.5,830.5 380,828" fill="#9a6240" stroke="#2a1206" stroke-width="1" stroke-linejoin="round"/>
<polygon points="456,769 462.5,774.5 481,774.5 483,800 457.5,801" fill="#f5b48c" stroke="#2a1206" stroke-width="1" stroke-linejoin="round"/>
<polygon points="481,774.5 505,775 506,799.5 483,800" fill="#d69771" stroke="#2a1206" stroke-width="1" stroke-linejoin="round"/>
<polygon points="505,775 512.5,774.5 515,801 506,799.5" fill="#fffbea" stroke="#2a1206" stroke-width="1" stroke-linejoin="round"/>
<polygon points="399.4,602.5 383.75,616.25 372,663.75 370,690 366,732.5 385,725 386.25,690 388,652.5 393.75,625" fill="#773a15" stroke="#2a1206" stroke-width="1" stroke-linejoin="round"/>
<polyline points="372,663.75 388,652.5" fill="none" stroke="#2a1206" stroke-width="1" stroke-linejoin="round"/>
<polygon points="399.4,602.5 451.25,572.5 456.25,647.5 462,714 385,725 386.25,690 388,652.5 393.75,625" fill="url(#gPeach)" stroke="#2a1206" stroke-width="1" stroke-linejoin="round"/>
<clipPath id="cpPeach"><polygon points="399.4,602.5 451.25,572.5 456.25,647.5 462,714 385,725 386.25,690 388,652.5 393.75,625"/></clipPath><ellipse cx="452" cy="706" rx="50" ry="62" fill="url(#gShadow)" clip-path="url(#cpPeach)"/>
<polygon points="451.25,572.5 470,562 480,567.5 470,615 465,700 462,714 456.25,647.5" fill="#773a15" stroke="#2a1206" stroke-width="1" stroke-linejoin="round"/>
<polygon points="371,822.5 372.5,835 379,842.5 375,825" fill="#773a15" stroke="#2a1206" stroke-width="1" stroke-linejoin="round"/>
<polygon points="451,713 456,713 458,768 463,775 458,801 452,790" fill="#f0b48e" stroke="none" stroke-width="1" stroke-linejoin="round"/>
<polygon points="366,732.5 365,757.5 371,822.5" fill="#6e3412" stroke="#2a1206" stroke-width="1" stroke-linejoin="round"/>
<polygon points="366,732.5 372.5,730 379,816 371,822.5" fill="#773a15" stroke="#2a1206" stroke-width="1" stroke-linejoin="round"/>
<polygon points="372.5,730 385,725 390,811 379,816" fill="#874722" stroke="#2a1206" stroke-width="1" stroke-linejoin="round"/>
<polygon points="385,725 402.5,720 409,806 390,811" fill="#8f4e28" stroke="#2a1206" stroke-width="1" stroke-linejoin="round"/>
<polygon points="402.5,720 426,715 431,802.5 409,806" fill="#a2613a" stroke="#2a1206" stroke-width="1" stroke-linejoin="round"/>
<polygon points="426,715 451.8,713.5 457.7,801 431,802.5" fill="#c28058" stroke="#2a1206" stroke-width="1" stroke-linejoin="round"/>
<polygon points="385,709 395,706 396,721 386,724" fill="#8f4f28" stroke="#2a1206" stroke-width="1" stroke-linejoin="round"/>
<polygon points="395,706 414,702.5 414,717 396,721" fill="#874822" stroke="#2a1206" stroke-width="1" stroke-linejoin="round"/>
<polygon points="414,702.5 434,701 434.5,714.5 414,717" fill="#d89a73" stroke="#2a1206" stroke-width="1" stroke-linejoin="round"/>
<polygon points="434,701 450,701 451,714 434.5,714.5" fill="#e2a47d" stroke="#2a1206" stroke-width="1" stroke-linejoin="round"/>
<polygon points="450,701 462.5,702.5 462.5,711 451,714" fill="#f6bb95" stroke="#2a1206" stroke-width="1" stroke-linejoin="round"/>
<polygon points="480,567.5 470,562 490,553 521,540 537.5,525 570,511 617.5,498.75 677.5,487.5 745,478.75 816,472.5 885,471 950,472 1002.5,476 1035,482.5 1037.5,484 1057.5,485 1127.5,497.5 1156,516 940,514 834,515 725,526 621,540 530,556" fill="#773a15" stroke="#2a1206" stroke-width="1" stroke-linejoin="round"/>
<polygon points="521,540 537.5,525 537.5,534 522.5,541" fill="#773a15" stroke="#2a1206" stroke-width="1" stroke-linejoin="round"/>
<polygon points="537.5,525 570,511 570,522.5 537.5,534" fill="#773a15" stroke="#2a1206" stroke-width="1" stroke-linejoin="round"/>
<polygon points="570,511 617.5,498.75 617.5,510 570,522.5" fill="#773a15" stroke="#2a1206" stroke-width="1" stroke-linejoin="round"/>
<polygon points="617.5,498.75 677.5,487.5 677.5,499 617.5,510" fill="#773a15" stroke="#2a1206" stroke-width="1" stroke-linejoin="round"/>
<polygon points="677.5,487.5 745,478.75 745,491 677.5,499" fill="#b87650" stroke="#2a1206" stroke-width="1" stroke-linejoin="round"/>
<polygon points="745,478.75 816,472.5 820,485 745,491" fill="#cd8c66" stroke="#2a1206" stroke-width="1" stroke-linejoin="round"/>
<polygon points="816,472.5 885,471 885,483 820,485" fill="#f9ba91" stroke="#2a1206" stroke-width="1" stroke-linejoin="round"/>
<polygon points="885,471 950,472 952.5,482.5 885,483" fill="#cf8e67" stroke="#2a1206" stroke-width="1" stroke-linejoin="round"/>
<polygon points="950,472 1002.5,476 1000,484.5 952.5,482.5" fill="#fffbea" stroke="#2a1206" stroke-width="1" stroke-linejoin="round"/>
<polygon points="1002.5,476 1035,482.5 1035,485 1000,484.5" fill="#f9ba91" stroke="#2a1206" stroke-width="1" stroke-linejoin="round"/>
<polyline points="470,562 518,543 558,533 639,518 731.7,506 827.5,497 919,495 1127.5,498.75" fill="none" stroke="#2a1206" stroke-width="1" stroke-linejoin="round"/>
<polyline points="522,540.5 568,525.5 605,515 673,501 677.5,499" fill="none" stroke="#2a1206" stroke-width="1" stroke-linejoin="round"/>
<polyline points="530,556 558,533 605,515" fill="none" stroke="#2a1206" stroke-width="1" stroke-linejoin="round"/>
<polyline points="480.8,568.5 518,543" fill="none" stroke="#2a1206" stroke-width="1" stroke-linejoin="round"/>
<polyline points="621,540 639,518 673,501" fill="none" stroke="#2a1206" stroke-width="1" stroke-linejoin="round"/>
<polyline points="725,526 731.7,506 744,491" fill="none" stroke="#2a1206" stroke-width="1" stroke-linejoin="round"/>
<polyline points="834,515 827.5,497 817.5,486" fill="none" stroke="#2a1206" stroke-width="1" stroke-linejoin="round"/>
<polyline points="940,514 919,495 887.5,483" fill="none" stroke="#2a1206" stroke-width="1" stroke-linejoin="round"/>
<polyline points="1020,494 1120,497.5" fill="none" stroke="#2a1206" stroke-width="1" stroke-linejoin="round"/>
<polygon points="480,567.5 530,556 524,601 470,615" fill="#6e3412" stroke="#2a1206" stroke-width="1" stroke-linejoin="round"/>
<polygon points="530,556 621,540 618,584.5 524,601" fill="#dfa27f" stroke="#2a1206" stroke-width="1" stroke-linejoin="round"/>
<polygon points="621,540 725,526 726,571 618,584.5" fill="#eaaa86" stroke="#2a1206" stroke-width="1" stroke-linejoin="round"/>
<polygon points="725,526 834,515 839,562.5 726,571" fill="#7d3f19" stroke="#2a1206" stroke-width="1" stroke-linejoin="round"/>
<polygon points="834,515 940,514 950,559 839,562.5" fill="#7d3f19" stroke="#2a1206" stroke-width="1" stroke-linejoin="round"/>
<polygon points="470,615 524,601 521,695 465,705" fill="#6e3412" stroke="#2a1206" stroke-width="1" stroke-linejoin="round"/>
<polygon points="524,601 618,584.5 620,676 521,695" fill="#dfa380" stroke="#2a1206" stroke-width="1" stroke-linejoin="round"/>
<polygon points="618,584.5 726,571 730.5,662.5 620,676" fill="#773a15" stroke="#2a1206" stroke-width="1" stroke-linejoin="round"/>
<polygon points="726,571 839,562.5 846,652.5 730.5,662.5" fill="#854620" stroke="#2a1206" stroke-width="1" stroke-linejoin="round"/>
<polygon points="839,562.5 950,559 960,650 846,652.5" fill="#c98962" stroke="#2a1206" stroke-width="1" stroke-linejoin="round"/>
<polygon points="465,705 521,695 526,749 457.5,767.5 455,714" fill="#773a15" stroke="#2a1206" stroke-width="1" stroke-linejoin="round"/>
<polygon points="521,695 620,676 624,731 526,749" fill="#7a3d17" stroke="#2a1206" stroke-width="1" stroke-linejoin="round"/>
<polygon points="620,676 730.5,662.5 735,717.5 624,731" fill="#9c5c37" stroke="#2a1206" stroke-width="1" stroke-linejoin="round"/>
<polygon points="730.5,662.5 846,652.5 851,707 735,717.5" fill="#c5845d" stroke="#2a1206" stroke-width="1" stroke-linejoin="round"/>
<polygon points="846,652.5 960,650 965,701.5 851,707" fill="#fbbf99" stroke="#2a1206" stroke-width="1" stroke-linejoin="round"/>
<polygon points="457.5,767.5 526,749 527.5,755 462.5,774.5" fill="#6e3412" stroke="#2a1206" stroke-width="1" stroke-linejoin="round"/>
<polygon points="526,749 624,731 625,738 527.5,755" fill="#773a15" stroke="#2a1206" stroke-width="1" stroke-linejoin="round"/>
<polygon points="624,731 735,717.5 735,723.75 625,738" fill="#c88660" stroke="#2a1206" stroke-width="1" stroke-linejoin="round"/>
<polygon points="735,717.5 851,707 851,713.5 735,723.75" fill="#f9ba91" stroke="#2a1206" stroke-width="1" stroke-linejoin="round"/>
<polygon points="851,707 965,701.5 965,708 851,713.5" fill="#f3b58d" stroke="#2a1206" stroke-width="1" stroke-linejoin="round"/>
<polygon points="965,701.5 1020,705 1020,713.75 965,708" fill="#d39670" stroke="#2a1206" stroke-width="1" stroke-linejoin="round"/>
<polygon points="1020,705 1072.5,706 1073.75,713.75 1020,713.75" fill="#d39670" stroke="#2a1206" stroke-width="1" stroke-linejoin="round"/>
<polygon points="940,514 1156,516 1600,525 1622.5,568.75 1400,565.5 950,559" fill="#f9ba91" stroke="#2a1206" stroke-width="1" stroke-linejoin="round"/>
<polygon points="950,559 1400,565.5 1622.5,568.75 1660,662.5 1500,659.5 1327.5,656 1068.75,652.5 960,650" fill="#b06f47" stroke="#2a1206" stroke-width="1" stroke-linejoin="round"/>
<polygon points="960,650 1068.75,652.5 1327.5,656 1500,659.5 1660,662.5 1673.75,705 1673.75,708.75 1647.5,716.25 1400,712.5 1330,710 1072.5,706 1020,705 965,701.5" fill="#cb8a63" stroke="#2a1206" stroke-width="1" stroke-linejoin="round"/>
<polygon points="1072.5,706 1330,710 1400,712.5 1647.5,716.25 1660,723.75 1652.5,725 1400,718.75 1328.75,717.5 1073.75,713.75" fill="#c58560" stroke="#2a1206" stroke-width="1" stroke-linejoin="round"/>
<polygon points="1600,525 1608.75,533.75 1625,558.75 1652.5,621.25 1670,660 1678.75,693.75 1678.75,707.5 1673.75,705 1660,662.5 1622.5,568.75" fill="#8a4a24" stroke="#2a1206" stroke-width="1" stroke-linejoin="round"/>
<polygon points="1608.75,533.75 1645,522.5 1683.75,542.5 1625,558.75" fill="#6e3412" stroke="#2a1206" stroke-width="1" stroke-linejoin="round"/>
<polygon points="1625,558.75 1683.75,542.5 1705,607 1653,621.25" fill="#cb8a63" stroke="#2a1206" stroke-width="1" stroke-linejoin="round"/>
<polygon points="1653,621.25 1705,607 1690,653.75 1668.75,660" fill="#d09069" stroke="#2a1206" stroke-width="1" stroke-linejoin="round"/>
<polygon points="1037.5,484 1091,432.5 1149,424 1156,516 1127.5,497.5 1057.5,485" fill="#6e3412" stroke="#2a1206" stroke-width="1" stroke-linejoin="round"/>
<polygon points="1149,424 1247.5,425 1326,427.5 1310,402.5 1490,405 1600,525 1156,516" fill="#773a15" stroke="#2a1206" stroke-width="1" stroke-linejoin="round"/>
<polygon points="1247.5,407.5 1253.38,406 1253.38,425 1247.5,425" fill="#8a4a24" stroke="#2a1206" stroke-width="0.7" stroke-linejoin="round"/>
<polygon points="1253.38,406 1259.25,406 1259.25,425 1253.38,425" fill="#9c5a33" stroke="#2a1206" stroke-width="0.7" stroke-linejoin="round"/>
<polygon points="1259.25,406 1265.12,406 1265.12,425 1259.25,425" fill="#b87650" stroke="#2a1206" stroke-width="0.7" stroke-linejoin="round"/>
<polygon points="1265.12,407.5 1271,407.5 1271,425 1265.12,425" fill="#c98862" stroke="#2a1206" stroke-width="0.7" stroke-linejoin="round"/>
<polygon points="1271,425.5 1276,418 1282,418 1282,426" fill="#6e3412" stroke="#2a1206" stroke-width="0.7" stroke-linejoin="round"/>
<polygon points="1281,405.5 1287,404 1287,426 1281,426" fill="#8a4a24" stroke="#2a1206" stroke-width="0.7" stroke-linejoin="round"/>
<polygon points="1287,404 1293,404 1293,426 1287,426" fill="#a86840" stroke="#2a1206" stroke-width="0.7" stroke-linejoin="round"/>
<polygon points="1293,404 1299,404 1299,426 1293,426" fill="#cb8a63" stroke="#2a1206" stroke-width="0.7" stroke-linejoin="round"/>
<polygon points="1299,405.5 1305,405.5 1305,426 1299,426" fill="#c07d55" stroke="#2a1206" stroke-width="0.7" stroke-linejoin="round"/>
<polygon points="1305,404 1310,402.5 1326,427.5 1305,426.5" fill="#6e3412" stroke="#2a1206" stroke-width="0.8" stroke-linejoin="round"/>
<polygon points="1073.75,715 1116,696 1150.5,693 1247.5,695 1237.5,696 1111,716" fill="#9a5f3c" stroke="#2a1206" stroke-width="1" stroke-linejoin="round"/>
<polygon points="1112.5,740.75 1240,720 1248.75,718.75 1295,720 1305,721 1302.5,725 1266,743.75" fill="#8f5836" stroke="#2a1206" stroke-width="1" stroke-linejoin="round"/>
<polygon points="1111,716 1237.5,696 1240,720 1112.5,740.75" fill="url(#gStep)" stroke="#2a1206" stroke-width="1" stroke-linejoin="round"/>
<polygon points="1237.5,696 1247.5,695 1248.75,718.75 1240,720" fill="#c07d55" stroke="#2a1206" stroke-width="1" stroke-linejoin="round"/>
<polygon points="1098.75,603.75 1108.75,599.5 1110,622.5 1100,626" fill="#8a4a24" stroke="#2a1206" stroke-width="1" stroke-linejoin="round"/>
<polygon points="1108.75,599.5 1128.75,597 1129.5,619.5 1110,622.5" fill="#9a5530" stroke="#2a1206" stroke-width="1" stroke-linejoin="round"/>
<polygon points="1128.75,597 1150,595.75 1151,618.75 1129.5,619.5" fill="#c88660" stroke="#2a1206" stroke-width="1" stroke-linejoin="round"/>
<polygon points="1150,595.75 1170,596.5 1171,618.75 1151,618.75" fill="#d9986f" stroke="#2a1206" stroke-width="1" stroke-linejoin="round"/>
<polygon points="1170,596.5 1182.5,598.75 1183.75,618.75 1171,618.75" fill="#fbbf99" stroke="#2a1206" stroke-width="1" stroke-linejoin="round"/>
<polygon points="1217,619.5 1240,616.5 1264,616.5 1277,619.5" fill="#e3a57f" stroke="#2a1206" stroke-width="0.7" stroke-linejoin="round"/>
<polygon points="1068.75,640 1112.5,622.5 1116,696 1073.75,715" fill="#6e3412" stroke="#2a1206" stroke-width="1" stroke-linejoin="round"/>
<polygon points="1112.5,622.5 1145,618.75 1150.5,693 1116,696" fill="url(#gBlk2)" stroke="#2a1206" stroke-width="1" stroke-linejoin="round"/>
<polygon points="1145,618.75 1290,620 1295,720 1248.75,718.75 1247.5,695 1150.5,693" fill="#cb8a63" stroke="#2a1206" stroke-width="1" stroke-linejoin="round"/>
<polygon points="1290,620 1323.75,627.5 1330,702.5 1303.75,697.5 1292.5,695" fill="#fbbf99" stroke="#2a1206" stroke-width="1" stroke-linejoin="round"/>
<polygon points="1292.5,695 1303.75,697.5 1305,721 1295,720" fill="#8a4a24" stroke="#2a1206" stroke-width="1" stroke-linejoin="round"/>
<polygon points="1303.75,697.5 1330,702.5 1326,720 1305,721" fill="#a86840" stroke="#2a1206" stroke-width="1" stroke-linejoin="round"/>
<g fill="none" stroke="#86a3d4" stroke-width="1.1"><ellipse cx="794" cy="521" rx="70" ry="12.5"/><ellipse cx="794" cy="549" rx="70" ry="12.5"/><path d="M724 521V549M864 521V549"/><path d="M790.5 550h7M794 546.5v7" stroke="#c9d4ea" stroke-width="0.9"/></g>
</svg>
<!--VPEXTRA-->
</div>
<div id="vpr"></div>
<!-- viewport overlays (page coordinates) -->
<!-- feature tree root -->
<svg class="abs" style="left:200.5px;top:157.5px" width="34" height="20" viewBox="0 0 34 20">
<path d="M10 8.5h7" stroke="#9a9a9a" stroke-width="1"/>
<rect x="1.5" y="4.5" width="8" height="8" fill="#fff" stroke="#8a8a8a"/><path d="M3.5 8.5h4M5.5 6.5v4" stroke="#000" stroke-width="1"/>
<path d="M17 5l5-3 5 2v2l5 1v6l-6 4-9-4z" fill="#f2e04a" stroke="#222" stroke-width="1"/>
<path d="M23 6l4-2 4 2v5l-4 2-4-2z" fill="#2fb02f" stroke="#0d4a0d" stroke-width="0.9"/><path d="M23 6l4 2 4-2M27 8v5" stroke="#0d4a0d" stroke-width="0.8" fill="none"/>
<path d="M17 5l9 5v6" stroke="#222" fill="none"/>
</svg>
<span class="abs" style="left:236.5px;top:161px;font-size:11px;line-height:13px;color:#111;white-space:nowrap;font-family:'DejaVu Sans','Liberation Sans',sans-serif;letter-spacing:-0.47px" id="treetxt">zadaca1&nbsp; (Default&lt;Display S...</span>
<!-- heads-up toolbar -->
<svg class="abs" style="left:905px;top:137px" width="310" height="24" viewBox="905 137 310 24">
<g><path d="M917 141v12" stroke="#222" stroke-width="1.2"/><path d="M914 144l3-3.5 3 3.5" fill="none" stroke="#222" stroke-width="1.1"/><path d="M910.5 153l6.5-3 6.5 3-6.5 3z" fill="#6fa8e6" stroke="#3f78c0" stroke-width="0.7"/></g>
<g><circle cx="938" cy="145.5" r="5.3" fill="#e9dcc9" stroke="#6b5a48" stroke-width="1.4"/><path d="M935.5 143l5 5M940.5 143l-5 5" stroke="#3a3a3a" stroke-width="1.2"/><path d="M942 150l5 5" stroke="#7a6fa8" stroke-width="2"/></g>
<g><circle cx="962" cy="146" r="5.5" fill="#d8c4ae" stroke="#a89684" stroke-width="1.3"/><path d="M962 142v4h-3" stroke="#6a5a4a" fill="none" stroke-width="1.2"/><path d="M966 151c1 3 3 4 5 3" stroke="#3a78c8" stroke-width="1.3" fill="none"/></g>
<g transform="rotate(-38 986 149)"><rect x="982" y="142" width="7" height="10" fill="#9fd0f2" stroke="#2f6fb8" stroke-width="1"/><ellipse cx="985.5" cy="153.5" rx="4.5" ry="3" fill="#e8f6ff" stroke="#2f6fb8" stroke-width="1"/><rect x="983.5" y="137.5" width="4" height="4.5" fill="#3b7fd0"/></g>
<g fill="#a9a9a9"><path d="M1002 143l6-2v14l-6 2z"/><path d="M1009 141h7v14l-4 2-3-2z" fill="#b4b4b4"/></g>
<g stroke="#2a55a5" stroke-width="1" fill="none"><path d="M1025 146h11v11h-11z" fill="#7fb2ea"/><path d="M1025 146l4-5h11l-4 5M1036 157l4-5v-11" /><path d="M1029 141v11h11M1029 152l-4 5" stroke="#777" stroke-width="0.7"/><path d="M1033 143h4M1035 141.5v3" stroke="#c03030" stroke-width="0.8"/></g>
<path d="M1044.5 148h5l-2.5 3z" fill="#555"/>
<g stroke="#4a4a4a" stroke-width="1" fill="none"><path d="M1058 145h11v12h-11z" fill="url(#cubeg)"/><path d="M1058 145l4-5h11l-4 5" fill="#dfeaf8"/><path d="M1069 157l4-5v-12" fill="#6d9fe0"/></g>
<path d="M1077.500 148h5l-2.5 3z" fill="#555"/>
<g stroke="#7a7a7a" stroke-width="1.2" fill="none"><circle cx="1094" cy="150" r="3.2"/><circle cx="1102" cy="151" r="3.2"/><path d="M1097 149.500c1-1 2-1 2.300 0M1091 148l3-3M1105 149l2-3"/></g>
<path d="M1110.500 148h5l-2.500 3z" fill="#555"/>
<circle cx="1131" cy="148.500" r="7.500" fill="#a6a6a6"/>
<g fill="#a3a3a3"><circle cx="1154" cy="145" r="5"/><path d="M1146 156c0-5 3-8 8-8s8 3 8 8z"/></g>
<path d="M1166.500 148h5l-2.500 3z" fill="#555"/>
<g><rect x="1180.500" y="143.500" width="13" height="10" fill="#e6e6ea" stroke="#333" stroke-width="1.1"/><path d="M1183 146.500h8v5h-8z" fill="#f4f4f6" stroke="#777" stroke-width="0.7"/><path d="M1184 157l3-3 3 3M1181 156h12" stroke="#333" stroke-width="0.9" fill="none"/><path d="M1186 141l4-2.500 5 3-4 2.500z" fill="#e7c77a" stroke="#8a6a20" stroke-width="0.7"/></g>
<path d="M1199.500 148h5l-2.500 3z" fill="#555"/>
<defs><linearGradient id="cubeg" x1="0" y1="0" x2="1" y2="0"><stop offset="0" stop-color="#f4f8fd"/><stop offset="1" stop-color="#5f95de"/></linearGradient></defs>
</svg>
<!-- child window buttons -->
<svg class="abs" style="left:1846px;top:140px" width="66" height="18" viewBox="0 0 66 18" fill="none" stroke="#5f6070" stroke-width="1.6"><path d="M6 11h7"/><rect x="28" y="7" width="8" height="6" fill="#d6d6da"/><path d="M31 7v-3h8v6h-3"/><path d="M52 4l8 9M60 4l-8 9" stroke-width="1.7"/></svg>
<!-- confirmation corner -->
<svg class="abs" style="left:1816px;top:166px" width="66" height="58" viewBox="0 0 66 58" fill="none" stroke-linecap="round" stroke-linejoin="round">
<path d="M4 15l8 8 18-19" stroke="#a5cfa5" stroke-width="3.4"/><path d="M4 15l8 8 18-19" stroke="#d3ead0" stroke-width="1.4"/>
<path d="M40 33l20 20M60 33l-20 20" stroke="#e3a3a3" stroke-width="3.6"/><path d="M40 33l20 20M60 33l-20 20" stroke="#f0c9c6" stroke-width="1.4"/>
</svg>
<!-- green square handle, cursor -->
<div class="abs" style="left:652px;top:292px;width:14px;height:14px;background:radial-gradient(circle at 45% 40%,#7dff6e,#25c820 70%);border:1.500px solid #0c5a12"></div>
<svg class="abs" style="left:636px;top:274px" width="16" height="24" viewBox="0 0 16 24"><path d="M1.500 1.500v17l4-3.500 3 7 3-1.300-3-6.800h5.500z" fill="#fff" stroke="#111" stroke-width="1.100" stroke-linejoin="round"/></svg>
<!-- tooltip -->
<div class="abs" style="left:646px;top:314px;width:250px;height:19px;border:1px solid #767676;border-radius:3px;background:linear-gradient(#ffffff,#e9ecf5);box-shadow:1.500px 1.500px 2px rgba(0,0,0,0.45)"></div>
<span class="abs" style="left:652px;top:317px;font-size:11.250px;line-height:13px;color:#555;white-space:nowrap" id="tip">Cut-Extrude1 of IRB140_-_M2004C_LINK1&lt;1&gt;</span>
<!-- watermark -->
<svg class="abs" style="left:888px;top:501px" width="146" height="38" viewBox="888 501 146 38">
<defs><linearGradient id="gW" x1="0" y1="0" x2="0" y2="1"><stop offset="0" stop-color="#ee7422"/><stop offset="0.55" stop-color="#f09226"/><stop offset="1" stop-color="#f2ae2c"/></linearGradient>
<linearGradient id="gWt" x1="0" y1="0" x2="0" y2="1"><stop offset="0" stop-color="#ee8226"/><stop offset="1" stop-color="#f2a43c"/></linearGradient></defs>
<g fill="url(#gW)">
<path d="M891 513h2.600v19h-2.600zM895 508.500h3v23.500h-3zM899.300 504h3.400v28h-3.400zM924 504h3.400v28h-3.400zM928.700 508.500h3v23.500h-3zM933.100 513h2.600v19h-2.600z"/>
<path d="M891 531.500h11.700l10.600 3 10.700-3h11.700v4.500h-44.700z"/>
<path d="M902.700 526l10.600 6 10.700-6v2.200l-10.700 5.800-10.600-5.800z"/>
<path d="M915.500 505.500c-7.500 1-12 6.500-11 13s6 9.500 10.500 9.500c-4-2.500-6.500-6-5.500-11s3-8 6-11.500z"/>
<path d="M917.500 509c4 3 6 7.500 4.500 12s-5 7-9 7c3.500-2 5.500-5 5-8.500s-2.500-5-2-8c0.300-1 0.800-1.800 1.500-2.500z"/>
</g>
<text x="946.500" y="525" font-family="'Liberation Sans','Noto Sans CJK SC',sans-serif" font-size="17.500" font-weight="bold" fill="url(#gWt)" textLength="83" lengthAdjust="spacingAndGlyphs">智造资料网</text>
<text x="946.500" y="534.300" font-family="'Liberation Sans',sans-serif" font-size="4.600" font-weight="bold" fill="#f09a36" textLength="83" lengthAdjust="spacingAndGlyphs">INTELLIGENT MANUFACTURING DATA</text>
</svg>
<!-- triad -->
<svg class="abs" style="left:204px;top:874px" width="58" height="52" viewBox="204 874 58 52">
<path d="M240 915l11-5" stroke="#1f7a2a" stroke-width="3"/><path d="M245 915l8-6 1 5z" fill="#1f7a2a"/>
<path d="M240 916h-22" stroke="#d02828" stroke-width="2.600"/><path d="M213 916.500l8-3.500v7z" fill="#d02828"/>
<path d="M239.500 916l-1.500-22" stroke="#2020c0" stroke-width="2.600"/><path d="M237.500 885l3.800 9h-7z" fill="#2020c0"/>
<text x="233" y="887" font-family="'Liberation Sans',sans-serif" font-size="9.500" fill="#2020a0" font-weight="bold">Z</text>
<text x="207" y="920" font-family="'Liberation Sans',sans-serif" font-size="9.500" fill="#c02020">X</text>
<text x="251" y="914" font-family="'Liberation Sans',sans-serif" font-size="9.500" fill="#1f7a2a" font-style="italic">y</text>
</svg>
<!-- task pane tabs -->
<svg class="abs" style="left:1894px;top:192px" width="25" height="150" viewBox="1894 192 25 150">
<g stroke="#8f93ad" stroke-width="1">
<path d="M1919 194.500h-19q-3.500 0-3.500 3.500v16q0 3.500 3.500 3.500h19z" fill="#c9ccdd"/>
<path d="M1919 218.500h-19q-3.500 0-3.500 3.500v16q0 3.500 3.500 3.500h19z" fill="#c9ccdd"/>
<path d="M1919 242.500h-19q-3.500 0-3.500 3.500v16q0 3.500 3.500 3.500h19z" fill="#c9ccdd"/>
<path d="M1919 266.500h-19q-3.500 0-3.500 3.500v16q0 3.500 3.500 3.500h19z" fill="#c9ccdd"/>
<path d="M1919 290.500h-19q-3.500 0-3.500 3.500v16q0 3.500 3.500 3.500h19z" fill="#f1f2f8"/>
<path d="M1919 314.500h-19q-3.500 0-3.500 3.500v16q0 3.500 3.500 3.500h19z" fill="#c9ccdd"/>
</g>
<path d="M1901 206l7.500-7 7.500 7v7h-15z" fill="#f8e27a" stroke="#8a6a10" stroke-width="1"/><rect x="1906" y="207" width="4" height="6" fill="#fff" stroke="#8a6a10" stroke-width="0.700"/><rect x="1913" y="198" width="2" height="4" fill="#c03030"/>
<g stroke="#222" stroke-width="0.800"><rect x="1901" y="228" width="5" height="9" fill="#3aa83a"/><rect x="1906" y="224" width="5" height="13" fill="#f2d04a"/><rect x="1911" y="222" width="5" height="15" fill="#4a7fd8"/></g>
<path d="M1901 249l2-2h5l1 2h6v3h-10l-3 8z" fill="#f6dc72" stroke="#9a7a12"/><path d="M1901 260l3-8h13l-3 8z" fill="#fbe98f" stroke="#9a7a12"/>
<g><rect x="1901.500" y="269.500" width="14" height="11" fill="#e8ebf8" stroke="#3a4a9a"/><rect x="1903" y="271" width="5" height="3" fill="#f2d04a"/><rect x="1909" y="271" width="5" height="3" fill="#3a4a9a"/><rect x="1903" y="276" width="11" height="3" fill="#f2d04a"/><path d="M1901 285h8M1906 282l3 3-3 3" stroke="#1a1ab0" stroke-width="1.600" fill="none"/></g>
<circle cx="1908.500" cy="302" r="7.500" fill="#e33"/><path d="M1908.500 302v-7.500a7.500 7.500 0 0 1 7 10z" fill="#3a6fe0"/><path d="M1908.500 302l7 2.500a7.500 7.500 0 0 1 -11 3.500z" fill="#34b034"/><path d="M1908.500 302l-4 6a7.500 7.500 0 0 1 -3-8z" fill="#f2d04a"/><ellipse cx="1906.500" cy="298" rx="3.500" ry="2.500" fill="#fff" opacity="0.550"/>
<path d="M1902 322h4l2-2h6v3h2v12h-14z" fill="#ecebe6" stroke="#555"/><path d="M1904 327h9M1904 330h9M1904 333h9" stroke="#999" stroke-width="0.800"/><path d="M1906 321l5-3 5 3-5 3z" fill="#e7c77a" stroke="#8a6a20" stroke-width="0.700"/>
</svg>
<!-- ===== CommandManager tabs ===== -->
<div id="tabs">
<div class="tab act" style="left:0;width:72px">Assembly</div>
<div class="tab" style="left:72px;width:57px">Layout</div>
<div class="tab" style="left:129px;width:56px">Sketch</div>
<div class="tab" style="left:185px;width:63px">Evaluate</div>
<div class="tab" style="left:248px;width:90px">Render Tools</div>
<div class="tab" style="left:338px;width:99px">Office Products</div>
<div class="tab" style="left:437px;width:94px">SolidCAM Part</div>
<div class="tab" style="left:531px;width:129px">SolidCAM Operations</div>
</div>
<!-- ===== Left PropertyManager panel ===== -->
<div id="lp"></div><div id="lpb"></div>
<div class="abs" style="left:0;top:158px;width:197px;height:1px;background:#c9cbd9"></div>
<!-- manager tabs -->
<svg class="abs" style="left:0;top:160px" width="197" height="26" viewBox="0 0 197 26">
<path d="M0 24.500h197" stroke="#9a9db2"/>
<g stroke="#a3a6bb" stroke-width="1">
<path d="M0.500 24V6q0-3 3-3h20q3 0 3 3v18" fill="#cdd0e0"/>
<path d="M29.500 25V6q0-3 3-3h19q3 0 3 3v19" fill="#f2f3f9"/>
<path d="M57.500 24V6q0-3 3-3h19q3 0 3 3v18" fill="#cdd0e0"/>
<path d="M85.500 24V6q0-3 3-3h19q3 0 3 3v18" fill="#cdd0e0"/>
</g>
<g><path d="M6 8l5-3 5 2v2l5 1v6l-6 4-9-4z" fill="#f2e04a" stroke="#222" stroke-width="1"/><path d="M12 9l4-2 4 2v5l-4 2-4-2z" fill="#2fb02f" stroke="#0d4a0d" stroke-width="0.900"/><path d="M12 9l4 2 4-2M16 11v5" stroke="#0d4a0d" stroke-width="0.800" fill="none"/><path d="M6 8l9 5v6" stroke="#222" fill="none"/></g>
<g><rect x="34.500" y="10.500" width="12" height="10" fill="#fbfbf4" stroke="#555"/><path d="M33 11l7-4 8 4" fill="#e7c77a" stroke="#8a6a20" stroke-width="0.800"/><rect x="36" y="13" width="3" height="2" fill="#c8b23a"/><rect x="36" y="17" width="3" height="2" fill="#c8b23a"/><path d="M41 14h4M41 18h4" stroke="#888"/><path d="M41 7l6-2 2 3-5 2z" fill="#f0b070" stroke="#8a5a20" stroke-width="0.700"/></g>
<g stroke="#222" stroke-width="1"><path d="M63.500 6v14M63.500 10h4M63.500 19h6" fill="none"/><rect x="67.500" y="6.500" width="6" height="6" rx="1.500" fill="#f2d04a"/><rect x="70.500" y="15.500" width="6" height="6" rx="1.500" fill="#f2d04a"/><path d="M60.500 5.500h3M60.500 9h3" fill="none"/></g>
<g><circle cx="97.500" cy="13.500" r="7.500" fill="#e02a2a"/><path d="M97.500 13.500v-7.500a7.500 7.500 0 0 0 -7.300 9.500z" fill="#3a4fd0"/><path d="M97.500 13.500l-7.300 2a7.500 7.500 0 0 0 14.500 0.500z" fill="#f4b21a"/><path d="M97.500 13.500l3-6.800a7.500 7.500 0 0 1 4 9z" fill="#201010"/><ellipse cx="95" cy="10" rx="3.500" ry="2.500" fill="#fff" opacity="0.600"/></g>
</svg>
<!-- Mate header -->
<div class="abs" style="left:1px;top:187px;width:195px;height:22px;background:linear-gradient(#8a8daa 0%,#a3a6bf 20%,#7f829f 55%,#9a9db6 100%);border:1px solid #4f5270;border-top-color:#6a6d8a"></div>
<svg class="abs" style="left:2px;top:189px" width="16" height="18" viewBox="0 0 16 18"><g transform="rotate(-38 8 9)"><rect x="5" y="0.5" width="6" height="17" rx="3" fill="#c9cbdb" stroke="#3c3e55" stroke-width="1.100"/><rect x="6.8" y="3.5" width="2.400" height="11" rx="1.200" fill="none" stroke="#3c3e55" stroke-width="0.900"/></g></svg>
<span class="abs" style="left:21px;top:189px;font-size:14px;line-height:17px;color:#fff;font-weight:bold;letter-spacing:0.2px;text-shadow:0 1px 1px rgba(40,40,70,0.600)">Mate</span>
<span class="abs" style="left:180px;top:189px;font-size:13px;line-height:17px;color:#fff;font-weight:bold;text-shadow:0 1px 1px rgba(40,40,70,0.700)">?</span>
<!-- ok cancel undo -->
<svg class="abs" style="left:2px;top:213px" width="74" height="20" viewBox="0 0 74 20" fill="none" stroke-linecap="round" stroke-linejoin="round">
<path d="M3.500 10.500l5 5.500 9-11.500" stroke="#1a8a1a" stroke-width="3.200"/><path d="M3.500 10.500l5 5.500 9-11.500" stroke="#4fd04f" stroke-width="1.300"/>
<path d="M31 4.500l10 11M41 4.500l-10 11" stroke="#b81414" stroke-width="3.200"/><path d="M31 4.500l10 11M41 4.500l-10 11" stroke="#f04040" stroke-width="1.200"/>
<path d="M56 6h6.500a5.500 5.500 0 0 1 3 10" stroke="#a8aab8" stroke-width="2.200"/><path d="M59.500 2.500l-4 3.500 4 3.500" stroke="#a8aab8" stroke-width="2"/>
</svg>
<!-- Mates / Analysis tabs -->
<svg class="abs" style="left:0;top:244px" width="197" height="26" viewBox="0 0 197 26">
<path d="M63 23.500h134" stroke="#8e91a6"/><path d="M0 23.500h2.500" stroke="#8e91a6"/>
<path d="M66.500 23.500V8q0-5 5-5h60q5 0 5 5v15.500" fill="#cfd2e2" stroke="#8e91a6"/>
<path d="M2.500 24V8q0-5 5-5h50q5 0 5 5v16" fill="#eceef6" stroke="#8e91a6"/>
<g transform="rotate(-38 14 13)"><rect x="11" y="4.5" width="6" height="17" rx="3" fill="#c9cbdb" stroke="#3c3e55" stroke-width="1.100"/><rect x="12.8" y="7.5" width="2.400" height="11" rx="1.200" fill="none" stroke="#3c3e55" stroke-width="0.900"/></g>
<g><circle cx="82" cy="10" r="4.500" fill="#f0b030" stroke="#7a5208" stroke-width="1"/><circle cx="82" cy="10" r="1.500" fill="#fff"/><circle cx="77" cy="17.500" r="3.800" fill="#f4f4f4" stroke="#333" stroke-width="1.200" stroke-dasharray="2 1"/><path d="M78.500 14l2-1.500" stroke="#7a5208" stroke-width="1.500"/></g>
</svg>
<span class="lbl" style="left:29px;top:251px;color:#222">Mates</span>
<span class="lbl" style="left:93px;top:251px;color:#222">Analysis</span>
<div class="grp" style="top:284px;height:188px"><div class="gh">Mate Selections<svg class="chev" viewBox="0 0 9 11" fill="none" stroke="#3a3d55" stroke-width="1.300"><path d="M1 5.500l3.500-3.500 3.500 3.500M1 10l3.500-3.500 3.500 3.500"/></svg></div></div>
<div class="grp" style="top:479px;height:20px"><div class="gh closed">Standard Mates<svg class="chev" viewBox="0 0 9 11" fill="none" stroke="#3a3d55" stroke-width="1.300"><path d="M1 1.500l3.500 3.500 3.500-3.500M1 6l3.500 3.500 3.500-3.500"/></svg></div></div>
<div class="grp" style="top:511px;height:20px"><div class="gh closed">Advanced Mates<svg class="chev" viewBox="0 0 9 11" fill="none" stroke="#3a3d55" stroke-width="1.300"><path d="M1 1.500l3.500 3.500 3.500-3.500M1 6l3.500 3.500 3.500-3.500"/></svg></div></div>
<div class="grp" style="top:543px;height:258px"><div class="gh">Mechanical Mates<svg class="chev" viewBox="0 0 9 11" fill="none" stroke="#3a3d55" stroke-width="1.300"><path d="M1 5.500l3.500-3.500 3.500 3.500M1 10l3.500-3.500 3.500 3.500"/></svg></div></div>
<div class="grp" style="top:808px;height:20px"><div class="gh closed">Mates<svg class="chev" viewBox="0 0 9 11" fill="none" stroke="#3a3d55" stroke-width="1.300"><path d="M1 1.500l3.500 3.500 3.500-3.500M1 6l3.500 3.500 3.500-3.500"/></svg></div></div>
<div class="grp" style="top:840px;height:101px"><div class="gh">Options<svg class="chev" viewBox="0 0 9 11" fill="none" stroke="#3a3d55" stroke-width="1.300"><path d="M1 5.500l3.500-3.500 3.500 3.500M1 10l3.500-3.500 3.500 3.500"/></svg></div></div>
<span class="lbl" style="left:35px;top:307px">Concentric Selections:</span>
<div class="abs" style="left:35px;top:323px;width:11px;height:43px;background:#4f9ff8"></div>
<div class="abs" style="left:47px;top:323px;width:139px;height:43px;background:#fff;border:1px solid #8f93a8"></div>
<span class="lbl" style="left:49.500px;top:327px;color:#222;letter-spacing:-0.2px" id="f1">Face&lt;1&gt;@IRB140_-_M200·</span>
<span class="lbl" style="left:49.500px;top:342.500px;color:#222;letter-spacing:-0.2px" id="f2">Face&lt;2&gt;@IRB140_-_M200·</span>
<span class="lbl" style="left:35px;top:376px">Coincident Selections:</span>
<div class="abs" style="left:35px;top:397px;width:11px;height:42px;background:#7a00ff"></div>
<div class="abs" style="left:47px;top:396px;width:139px;height:44px;background:#cfe2f8;border:2px solid #72b4e6;box-shadow:inset 0 0 2px #a8d4f4"></div>
<div class="cb" style="left:35px;top:449px"></div>
<span class="lbl" style="left:50px;top:449.500px;color:#222">Specify angle limits</span>
<svg class="abs" style="left:7px;top:322px" width="26" height="30" viewBox="0 0 26 30"><path d="M16 1l8 9v6l-8-6z" fill="#fff" stroke="#111" stroke-width="1"/><path d="M1 18h9l8 8h-9z" fill="#fff" stroke="#111" stroke-width="1"/><g stroke="#1a1a1a" stroke-width="0.900"><ellipse cx="17" cy="12" rx="3" ry="4" fill="#3cb83c" transform="rotate(-35 17 12)"/><ellipse cx="13" cy="16" rx="3" ry="4" fill="#3cb83c" transform="rotate(-35 13 16)"/><ellipse cx="10" cy="19.500" rx="3" ry="4" fill="#eee" transform="rotate(-35 10 19.500)"/></g></svg>
<svg class="abs" style="left:7px;top:395px" width="26" height="30" viewBox="0 0 26 30"><path d="M16 1l8 9v6l-8-6z" fill="#fff" stroke="#111" stroke-width="1"/><path d="M1 18h9l8 8h-9z" fill="#fff" stroke="#111" stroke-width="1"/><g stroke="#1a1a1a" stroke-width="0.900"><ellipse cx="17" cy="12" rx="3" ry="4" fill="#eeeeee" transform="rotate(-35 17 12)"/><ellipse cx="13" cy="16" rx="3" ry="4" fill="#eeeeee" transform="rotate(-35 13 16)"/><ellipse cx="10" cy="19.500" rx="3" ry="4" fill="#eee" transform="rotate(-35 10 19.500)"/></g><path d="M3 20l6 7h8" stroke="#22b022" stroke-width="2.200" fill="none"/><path d="M22 8v8l-3 2" stroke="#22b022" stroke-width="2" fill="none"/></svg>
<div class="mbtn" style="top:566px;"><svg width="23" height="23" viewBox="0 0 23 23" style="position:absolute;left:-1px;top:-1px"><path d="M7 14c-2-5 3-10 9-9c3 1 2 6-1 10s-7 3-8-1z" fill="none" stroke="#222" stroke-width="1.200"/></svg></div>
<span class="lbl" style="left:34.5px;top:572px;color:#2a2c38">Cam</span>
<div class="mbtn" style="top:597px;background:linear-gradient(#cfcff0,#b9b9e4);border-color:#6f6f9f"><svg width="23" height="23" viewBox="0 0 23 23" style="position:absolute;left:-1px;top:-1px"><path d="M5 13l7 5 5-2-7-5zM12 18v-9l5 4v3M7 9l5 3M15 6l-3 3" fill="none" stroke="#5a5a8a" stroke-width="1.100"/></svg></div>
<span class="lbl" style="left:35px;top:603px;color:#2a2c38">Hinge</span>
<div class="mbtn" style="top:625.5px;"><svg width="23" height="23" viewBox="0 0 23 23" style="position:absolute;left:-1px;top:-1px"><circle cx="8" cy="14" r="4" fill="#999" stroke="#222"/><circle cx="15" cy="9" r="4.500" fill="#ddd" stroke="#222" stroke-dasharray="1.500 1"/><circle cx="8" cy="14" r="1.300" fill="#fff"/><circle cx="15" cy="9" r="1.300" fill="#fff" stroke="#222" stroke-width="0.600"/></svg></div>
<span class="lbl" style="left:34.5px;top:631.5px;color:#2a2c38">Gear</span>
<div class="mbtn" style="top:656px;"><svg width="23" height="23" viewBox="0 0 23 23" style="position:absolute;left:-1px;top:-1px"><circle cx="11.500" cy="9" r="5" fill="#ccc" stroke="#222" stroke-dasharray="1.500 1"/><circle cx="11.500" cy="9" r="1.500" fill="#fff" stroke="#222" stroke-width="0.600"/><path d="M3 14h3v2h11v-2h3v5h-17z" fill="#e8e8e8" stroke="#222"/></svg></div>
<span class="lbl" style="left:34px;top:662px;color:#2a2c38">Rack Pinion</span>
<div class="mbtn" style="top:687px;"><svg width="23" height="23" viewBox="0 0 23 23" style="position:absolute;left:-1px;top:-1px"><path d="M8 9l9 9" stroke="#222" stroke-width="1.200"/><path d="M8 12l4-4 4 4-4 4z" fill="#ddd" stroke="#222"/><path d="M4 10c-1-4 2-6 5-5M7 3l2 2-2 2" fill="none" stroke="#222" stroke-width="1.100"/></svg></div>
<span class="lbl" style="left:35px;top:693px;color:#2a2c38">Screw</span>
<div class="mbtn" style="top:719px;"><svg width="23" height="23" viewBox="0 0 23 23" style="position:absolute;left:-1px;top:-1px"><path d="M5 11l6.500-6 6.500 6h-2.500v3h-8v-3z" fill="#eee" stroke="#222"/><path d="M9 19v-5a2.500 2.500 0 0 1 5 0v5z" fill="#fff" stroke="#222"/><rect x="9" y="15" width="5" height="4" fill="#ccc" stroke="#222" stroke-width="0.800"/></svg></div>
<span class="lbl" style="left:35px;top:725px;color:#2a2c38">Universal Joint</span>
<span class="lbl" style="left:34px;top:751.500px;color:#a3a5b3">Mate alignment:</span>
<svg class="abs" style="left:52px;top:772px" width="62" height="20" viewBox="0 0 62 20" fill="none" stroke="#b3b5c2" stroke-width="1"><rect x="1.500" y="1.500" width="6" height="7"/><rect x="9.500" y="2.500" width="7" height="7"/><path d="M5 9v8M2.500 14.500l2.500 3 2.500-3M13 10v7M10.500 14.500l2.500 3 2.500-3"/><rect x="40.500" y="1.500" width="6" height="7"/><rect x="50.500" y="10.500" width="7" height="7"/><path d="M44 9v8M41.500 14.500l2.500 3 2.500-3M54 10V3M51.500 5.500l2.500-3 2.500 3"/></svg>
<div class="cb" style="left:8px;top:864.5px"></div>
<span class="lbl" style="left:23.500px;top:865.0px;color:#111">Add to new folder</span>
<div class="cb" style="left:8px;top:882.5px"><svg width="11" height="11" viewBox="0 0 11 11" style="position:absolute;left:0;top:0"><path d="M2 5l2.500 3 4.500-6.500" fill="none" stroke="#2a3f8a" stroke-width="1.700"/></svg></div>
<span class="lbl" style="left:23.500px;top:883.0px;color:#111">Show popup dialog</span>
<div class="cb" style="left:8px;top:900.5px"><svg width="11" height="11" viewBox="0 0 11 11" style="position:absolute;left:0;top:0"><path d="M2 5l2.500 3 4.500-6.500" fill="none" stroke="#2a3f8a" stroke-width="1.700"/></svg></div>
<span class="lbl" style="left:23.500px;top:901.0px;color:#111">Show preview</span>
<div class="cb" style="left:8px;top:918.5px"></div>
<span class="lbl" style="left:23.500px;top:919.0px;color:#111">Use for positioning only</span>
<svg class="abs" style="left:198px;top:541px" width="9" height="30" viewBox="0 0 9 30"><path d="M0 1.500h5q2.500 0 2.500 2.500v22q0 2.500-2.500 2.500h-5" fill="#e6e8f2" stroke="#6f7390"/><path d="M5 7l-2.500 2 2.500 2zM5 13l-2.500 2 2.500 2zM5 19l-2.500 2 2.500 2z" fill="#555a78"/></svg>
<!-- ===== bottom: model tabs, filter toolbar, status ===== -->
<div id="botbar"></div>
<svg class="abs" style="left:2px;top:977px" width="66" height="14" viewBox="0 0 66 14"><rect x="0" y="0" width="66" height="14" fill="#b3b7cb"/><g stroke="#8a8ea6"><path d="M16.500 0v14M33.500 0v14M49.500 0v14"/></g><g fill="#9a9eb6" stroke="#8d91a8" stroke-width="0.600"><path d="M5 3v8M12 3l-5 4 5 4z"/><path d="M28 3l-5 4 5 4z"/><path d="M38 3l5 4-5 4z"/><path d="M54 3l5 4-5 4zM61 3v8"/></g></svg>
<div class="abs" style="left:69px;top:976.5px;width:55px;height:14.5px;background:#eeeff5;border:1px solid #3a3c48;border-top:none;font-weight:bold;font-size:12px;line-height:14px;text-align:center;color:#111">Model</div>
<div class="abs" style="left:124px;top:977px;width:102px;height:14px;background:#b9bdd2;border:1px solid #5f6380;border-top:none;font-size:12px;line-height:12px;text-align:center;color:#222;white-space:nowrap">Motion Study 1</div>
<div id="filt"></div>
<svg class="abs" style="left:3px;top:995px" width="4" height="24" viewBox="0 0 4 24"><g fill="#8a8c9a"><rect x="1" y="1" width="1.300" height="1.300"/><rect x="1" y="5" width="1.300" height="1.300"/><rect x="1" y="9" width="1.300" height="1.300"/><rect x="1" y="13" width="1.300" height="1.300"/><rect x="1" y="17" width="1.300" height="1.300"/><rect x="1" y="21" width="1.300" height="1.300"/></g></svg>
<svg class="abs" style="left:0;top:993px" width="760" height="26" viewBox="0 993 760 26"><path d="M17.8 999.5h8.4l-3.2 4v4.6h-2v-4.6z" fill="#eeeef4" stroke="#b5b7c4" stroke-width="0.900"/><path d="M40.8 998.5h8.4l-3.2 4v4.6h-2v-4.6z" fill="#eeeef4" stroke="#b5b7c4" stroke-width="0.900"/><path d="M45.8 1002.5h8.4l-3.2 4v4.6h-2v-4.6z" fill="#eeeef4" stroke="#a9abb8" stroke-width="0.900"/><path d="M62.8 998.5h8.4l-3.2 4v4.6h-2v-4.6z" fill="#e4f0ff" stroke="#16379a" stroke-width="1.300"/><path d="M67.8 1002.5h8.4l-3.2 4v4.6h-2v-4.6z" fill="#9cc2f2" stroke="#2a55c8" stroke-width="0.900"/><path d="M91 998v13l3-3 2.500 5 2-1-2.500-5h4.500z" fill="#f4f4f8" stroke="#b0b2c0" stroke-width="1"/><path d="M109 1005h6l-3 3z" fill="#777"/><path d="M124 998v13l3-3 2.500 5 2-1-2.500-5h4.500z" fill="#9a9cab" stroke="#8a8c9a" stroke-width="1"/><path d="M130 998l6 8" stroke="#8a8c9a" stroke-width="1.500"/><path d="M145.500 996v22" stroke="#8f92a3"/><circle cx="157" cy="1010" r="3.200" fill="#2fd02f" stroke="#0a6a0a"/><path d="M160.8 996.5h8.4l-3.2 4v4.6h-2v-4.6z" fill="#e4f0ff" stroke="#16379a" stroke-width="1.300"/><rect x="179" y="998" width="3" height="17" fill="#2fd02f" stroke="#0a6a0a" stroke-width="0.800"/><path d="M184.8 996.5h8.4l-3.2 4v4.6h-2v-4.6z" fill="#e4f0ff" stroke="#16379a" stroke-width="1.300"/><rect x="200" y="1003" width="11" height="11" fill="#2fd02f" stroke="#0a6a0a"/><path d="M207.8 996.5h8.4l-3.2 4v4.6h-2v-4.6z" fill="#e4f0ff" stroke="#16379a" stroke-width="1.300"/><path d="M223 1008l9-6 5 6-9 6z" fill="#f4a428" stroke="#9a5a08"/><path d="M231.8 996.5h8.4l-3.2 4v4.6h-2v-4.6z" fill="#e4f0ff" stroke="#16379a" stroke-width="1.300"/><path d="M247 1005l4-3h8v9l-4 3h-8z" fill="#f8e07a" stroke="#8a6a10"/><path d="M247 1005h8v9M255 1005l4-3" fill="none" stroke="#8a6a10"/><path d="M254.8 996.5h8.4l-3.2 4v4.6h-2v-4.6z" fill="#e4f0ff" stroke="#16379a" stroke-width="1.300"/><path d="M269 998l12 16" stroke="#1a8a1a" stroke-width="1.500" stroke-dasharray="3 1.500"/><path d="M277.8 996.5h8.4l-3.2 4v4.6h-2v-4.6z" fill="#e4f0ff" stroke="#16379a" stroke-width="1.300"/><path d="M293 1004l9 9" stroke="#222" stroke-width="1"/><rect x="294" y="1005" width="9" height="6" fill="#f2e04a" stroke="#6a5a08" transform="rotate(35 298 1008)"/><path d="M300.8 996.5h8.4l-3.2 4v4.6h-2v-4.6z" fill="#e4f0ff" stroke="#16379a" stroke-width="1.300"/><path d="M315 1012h7M318.5 1008.500v7M316 1009.500l5 5M321 1009.500l-5 5" stroke="#1a2ad0" stroke-width="1"/><path d="M323.8 996.5h8.4l-3.2 4v4.6h-2v-4.6z" fill="#e4f0ff" stroke="#16379a" stroke-width="1.300"/><path d="M339 1004v10h10" stroke="#1a1ab0" stroke-width="2" fill="none"/><path d="M342 1010l8-5 1.500 2-8 5z" fill="#f2d04a" stroke="#6a5a08" stroke-width="0.800"/><path d="M346.8 996.5h8.4l-3.2 4v4.6h-2v-4.6z" fill="#e4f0ff" stroke="#16379a" stroke-width="1.300"/><rect x="361" y="998" width="3" height="15" fill="#2fd02f" stroke="#0a6a0a" stroke-width="0.800"/><path d="M362.5 1014h12" stroke="#1a1ab0" stroke-width="2"/><rect x="372" y="1011" width="4" height="4" fill="#1a1ab0"/><path d="M369.8 996.5h8.4l-3.2 4v4.6h-2v-4.6z" fill="#e4f0ff" stroke="#16379a" stroke-width="1.300"/><path d="M383 999l14 14" stroke="#222" stroke-width="1.500"/><circle cx="391" cy="1008" r="2.800" fill="#f2d04a" stroke="#8a6a10"/><path d="M392.8 996.5h8.4l-3.2 4v4.6h-2v-4.6z" fill="#e4f0ff" stroke="#16379a" stroke-width="1.300"/><circle cx="413" cy="1008" r="5.500" fill="none" stroke="#1a2ab0" stroke-width="1.100" stroke-dasharray="2.500 1.200"/><path d="M410 1008h6M413 1005v6" stroke="#1a2ab0"/><path d="M415.8 996.5h8.4l-3.2 4v4.6h-2v-4.6z" fill="#e4f0ff" stroke="#16379a" stroke-width="1.300"/><rect x="430" y="1003" width="5" height="4" fill="#ddd" stroke="#1a2ab0"/><rect x="430" y="1009" width="5" height="5" fill="#fff" stroke="#1a2ab0"/><path d="M435 1011h6" stroke="#1a2ab0"/><rect x="439" y="1009" width="3" height="3" fill="#1a2ab0"/><path d="M438.8 996.5h8.4l-3.2 4v4.6h-2v-4.6z" fill="#e4f0ff" stroke="#16379a" stroke-width="1.300"/><path d="M453 1010l6-6 3 3-6 6z" fill="#1a2ab0"/><path d="M452 1006l3-3M458 1014l3-3" stroke="#1a2ab0"/><path d="M461.8 996.5h8.4l-3.2 4v4.6h-2v-4.6z" fill="#e4f0ff" stroke="#16379a" stroke-width="1.300"/><path d="M475 1008l3 6 6-12" fill="none" stroke="#222" stroke-width="1.100"/><path d="M484.8 996.5h8.4l-3.2 4v4.6h-2v-4.6z" fill="#e4f0ff" stroke="#16379a" stroke-width="1.300"/><rect x="498" y="1005" width="13" height="8" fill="#f4f4f4" stroke="#222" stroke-width="0.900"/><path d="M502 1005v8" stroke="#222" stroke-width="0.800"/><circle cx="506.5" cy="1009" r="2" fill="none" stroke="#222" stroke-width="0.800"/><path d="M507.8 996.5h8.4l-3.2 4v4.6h-2v-4.6z" fill="#e4f0ff" stroke="#16379a" stroke-width="1.300"/><circle cx="527" cy="1008" r="5" fill="#f4f4f4" stroke="#222" stroke-width="1"/><path d="M525 1010.500v-5l4 5v-5" fill="none" stroke="#222" stroke-width="0.900"/><path d="M523 1012l-2.500 3" stroke="#222" stroke-width="1.300"/><path d="M530.8 996.5h8.4l-3.2 4v4.6h-2v-4.6z" fill="#e4f0ff" stroke="#16379a" stroke-width="1.300"/><path d="M544 1002v13" stroke="#222" stroke-width="1.200"/><rect x="546" y="1004" width="10" height="10" fill="#f4f4f4" stroke="#222" stroke-width="0.900"/><text x="547.5" y="1012.500" font-family="Liberation Serif,serif" font-size="9" font-weight="bold" fill="#111">A</text><path d="M553.8 996.5h8.4l-3.2 4v4.6h-2v-4.6z" fill="#e4f0ff" stroke="#16379a" stroke-width="1.300"/><path d="M567 1014l5-6 3 3 6-8" fill="none" stroke="#222" stroke-width="1.300"/><path d="M570 1014h8" stroke="#222"/><path d="M576.8 996.5h8.4l-3.2 4v4.6h-2v-4.6z" fill="#e4f0ff" stroke="#16379a" stroke-width="1.300"/><path d="M591 1003h10M591 1005.500h10" stroke="#222" stroke-width="0.900"/><path d="M592 1007c2 2 0 4 1 7M595 1007c2 2 0 4 1 7M598 1007c2 2 0 4 1 7M601 1007c2 2 0 4 1 7" fill="none" stroke="#222" stroke-width="0.800"/><path d="M599.8 996.5h8.4l-3.2 4v4.6h-2v-4.6z" fill="#e4f0ff" stroke="#16379a" stroke-width="1.300"/><circle cx="619" cy="1008.500" r="4.500" fill="#f4f4f4" stroke="#222" stroke-width="1"/><text x="616.5" y="1011.500" font-family="Liberation Sans,sans-serif" font-size="7" fill="#111">A</text><path d="M615 1012l-2 3" stroke="#222" stroke-width="1.200"/><path d="M622.8 996.5h8.4l-3.2 4v4.6h-2v-4.6z" fill="#e4f0ff" stroke="#16379a" stroke-width="1.300"/><path d="M638 1001v10l3 4 3-4v-10" fill="none" stroke="#1a2ab0" stroke-width="1" stroke-dasharray="2 1"/><path d="M638 1011l3 4 3-4" fill="none" stroke="#222"/><path d="M645.8 996.5h8.4l-3.2 4v4.6h-2v-4.6z" fill="#e4f0ff" stroke="#16379a" stroke-width="1.300"/><rect x="659" y="1004" width="11" height="11" fill="#f4f4f4" stroke="#222" stroke-width="0.900"/><text x="660.5" y="1013.500" font-family="Liberation Serif,serif" font-size="9" font-weight="bold" fill="#111">A</text><path d="M668.8 996.5h8.4l-3.2 4v4.6h-2v-4.6z" fill="#e4f0ff" stroke="#16379a" stroke-width="1.300"/><circle cx="688" cy="1008.500" r="5.500" fill="#fff" stroke="#111" stroke-width="1"/><path d="M688 1008.500v-5.500a5.500 5.500 0 0 1 5.500 5.500zM688 1008.500v5.500a5.500 5.500 0 0 1 -5.500-5.500z" fill="#111"/><path d="M691.8 996.5h8.4l-3.2 4v4.6h-2v-4.6z" fill="#e4f0ff" stroke="#16379a" stroke-width="1.300"/><path d="M705 1012.500h13" stroke="#111" stroke-width="1.800"/><rect x="713" y="1010.500" width="4" height="4" fill="#4fd04f" stroke="#0a5a0a" stroke-width="0.800"/><path d="M710.8 996.5h8.4l-3.2 4v4.6h-2v-4.6z" fill="#e4f0ff" stroke="#16379a" stroke-width="1.300"/><path d="M729 1012.500h13" stroke="#111" stroke-width="1.800"/><rect x="735" y="1010.500" width="4" height="4" fill="#4fd04f" stroke="#0a5a0a" stroke-width="0.800"/><path d="M734.8 996.5h8.4l-3.2 4v4.6h-2v-4.6z" fill="#e4f0ff" stroke="#16379a" stroke-width="1.300"/><path d="M755.500 996v22" stroke="#8f92a3"/><path d="M756.500 996v22" stroke="#fff"/></svg>
<div id="status"></div>
<span class="abs" style="left:2px;top:1024px;font-size:11px;line-height:14px;color:#111;white-space:nowrap" id="st1">IRB140_-_M2004C_LINK1&lt;1&gt;</span>
<span class="abs" style="left:1596px;top:1024px;font-size:11.700px;line-height:14px;color:#111;white-space:nowrap" id="st2">Under Defined</span>
<span class="abs" style="left:1690px;top:1024px;font-size:11.900px;line-height:14px;color:#111;white-space:nowrap" id="st3">Editing Assembly</span>
<div class="abs" style="left:1677px;top:1023px;width:1px;height:16px;background:#b7b9c9;border-right:1px solid #f4f4fa"></div>
<div class="abs" style="left:1786px;top:1023px;width:1px;height:16px;background:#b7b9c9;border-right:1px solid #f4f4fa"></div>
<svg class="abs" style="left:1798px;top:1023px" width="112" height="16" viewBox="0 0 112 16"><rect x="3" y="1" width="7" height="13" rx="3" fill="#2a2a2a"/><circle cx="6.500" cy="4.500" r="2.300" fill="#e02020"/><circle cx="6.500" cy="10.500" r="2.300" fill="#20c020"/><rect x="29.500" y="2.500" width="11" height="11" fill="#fff" stroke="#1a7a6a"/><text x="32" y="12" font-family="Liberation Sans,sans-serif" font-size="10" font-weight="bold" fill="#18a018">?</text><g transform="rotate(-35 100 8)"><rect x="94" y="4" width="13" height="8" rx="2" fill="#f2d04a" stroke="#8a6a10"/><circle cx="104" cy="8" r="1.200" fill="#fff" stroke="#8a6a10" stroke-width="0.600"/></g></svg>
</body>
</html>
